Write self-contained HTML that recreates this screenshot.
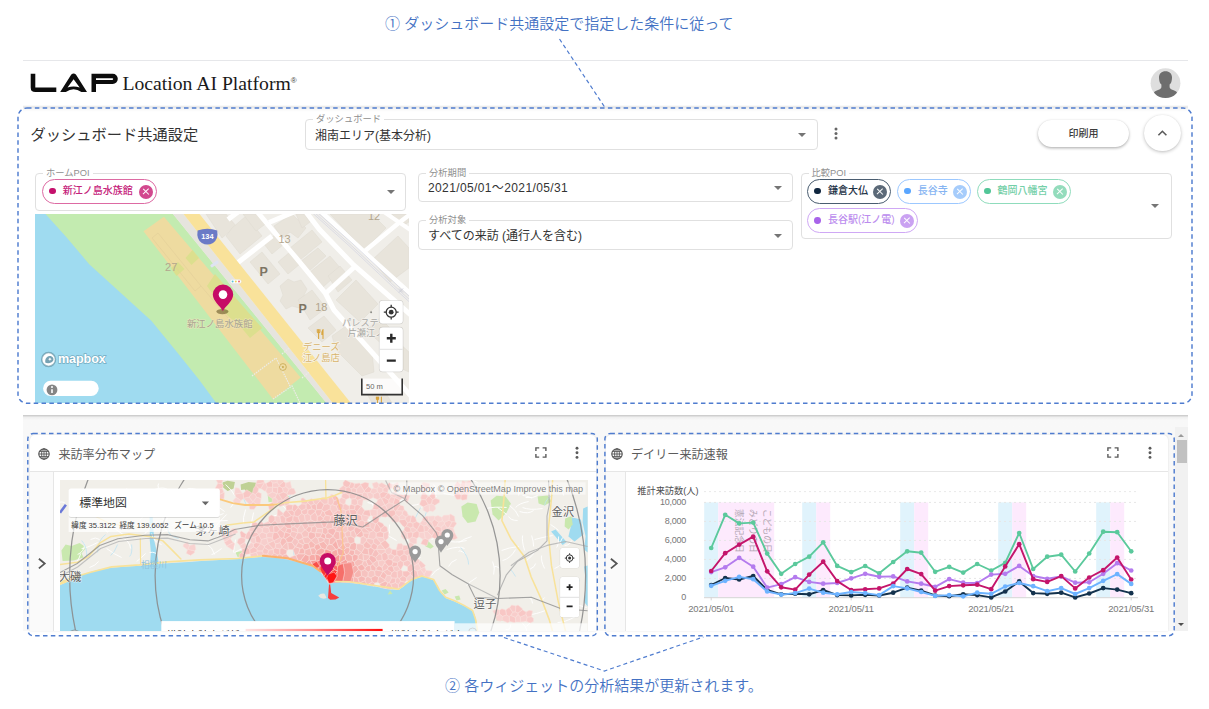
<!DOCTYPE html>
<html lang="ja">
<head>
<meta charset="utf-8">
<title>Location AI Platform</title>
<style>
*{box-sizing:border-box;margin:0;padding:0}
html,body{width:1209px;height:709px;overflow:hidden;background:#fff}
body{font-family:"Liberation Sans","Noto Sans CJK JP",sans-serif;color:#333;position:relative}
.abs{position:absolute}
.note{position:absolute;color:#4371c3;font-size:15px;font-weight:350;line-height:20px;white-space:nowrap}
.dash{position:absolute;border:1.3px dashed #5b83cc;border-radius:11px;pointer-events:none}
.fs{position:absolute;border:1px solid #e0e0e0;border-radius:4px;background:#fff}
.fs .lb{position:absolute;top:-6px;left:7px;background:#fff;padding:0 3px;font-size:9.3px;line-height:10px;color:#8f8f8f;white-space:nowrap}
.fs .val{position:absolute;left:9px;font-size:12px;color:#333;white-space:nowrap}
.arrow{position:absolute;width:0;height:0;border-left:4px solid transparent;border-right:4px solid transparent;border-top:4px solid #757575}
.chip{position:absolute;height:24.6px;border-radius:12.5px;border:1px solid;background:#fff;font-size:10px;font-weight:500;white-space:nowrap;line-height:22.6px;padding-left:20px}
.chip i{position:absolute;left:6.2px;top:7.6px;width:6.8px;height:6.8px;border-radius:50%}
.chip b{position:absolute;right:3.4px;top:4.6px;width:14px;height:14px;border-radius:50%}
.chip b:before,.chip b:after{content:"";position:absolute;left:3.2px;top:6.35px;width:7.6px;height:1.3px;background:#fff;transform:rotate(45deg)}
.chip b:after{transform:rotate(-45deg)}
.card{position:absolute;background:#fff;border-radius:8px;overflow:hidden}
.wt{position:absolute;font-size:12.1px;color:#5c5c5c;white-space:nowrap}
</style>
</head>
<body>
<!-- annotations -->
<div class="note" style="left:385px;top:14px;">① ダッシュボード共通設定で指定した条件に従って</div>
<div class="note" style="left:445px;top:676px;">② 各ウィジェットの分析結果が更新されます。</div>
<!-- header -->
<div class="abs" style="left:23px;top:59.5px;width:1165px;height:1px;background:#e6e7ea"></div>
<div class="abs" style="left:23px;top:105px;width:1165px;height:7px;background:linear-gradient(rgba(0,0,0,0),rgba(0,0,0,.10) 2px,rgba(0,0,0,.03) 4px,rgba(0,0,0,0))"></div>
<svg class="abs" style="left:25px;top:65px" width="100" height="35" viewBox="25 65 100 35">
 <path d="M33 73.7 V87.4 Q33 89.7 35.3 89.7 H56.3" fill="none" stroke="#0c0c0c" stroke-width="4.6"/>
 <path fill="#0c0c0c" fill-rule="evenodd" d="M60.2 92 L71.3 74.6 Q73.6 72.4 75.9 74.6 L87 92 H81.4 Q73.6 86.6 65.8 92 Z M73.6 79.2 L67.5 87.5 Q73.6 85.7 79.7 87.5 Z"/>
 <path fill="#0c0c0c" fill-rule="evenodd" d="M91.5 73.7 H112.7 a5.1 5.1 0 0 1 0 10.2 H96 V92 H91.5 Z M96 78.3 H112.4 a0.8 0.8 0 0 1 0 1.6 H96 Z"/>
</svg>
<div class="abs" style="left:122.4px;top:70px;font-family:'Liberation Serif',serif;font-size:19.7px;color:#1a1a1a;white-space:nowrap;line-height:26px">Location AI Platform<span style="font-family:'Liberation Sans',sans-serif;font-size:8px;position:relative;top:-7px;left:0px;color:#444">®</span></div>
<svg class="abs" style="left:1150px;top:68px" width="31" height="31" viewBox="0 0 31 31">
 <defs><clipPath id="av"><circle cx="15.5" cy="15.2" r="14.9"/></clipPath></defs>
 <circle cx="15.5" cy="15.2" r="14.9" fill="#dedede"/>
 <g clip-path="url(#av)" fill="#6e6e6e"><path d="M15.5 3.2 C19.6 3.2 22.2 5.8 22 10 C21.9 13 21.2 15.2 19.6 16.6 L19.6 19 C19.6 20.6 21 21.3 23 22 C25.5 22.9 27.3 24 28 26 L28 31 L3 31 L3 26 C3.7 24 5.5 22.9 8 22 C10 21.3 11.4 20.6 11.4 19 L11.4 16.6 C9.8 15.2 9.1 13 9 10 C8.8 5.8 11.4 3.2 15.5 3.2Z"/></g>
</svg>

<!-- common settings panel -->
<div class="abs" style="left:30.6px;top:124px;font-size:15.25px;color:#333;line-height:22px;white-space:nowrap">ダッシュボード共通設定</div>
<div class="fs" style="left:305px;top:119.3px;width:512.6px;height:30.8px"><span class="lb">ダッシュボード</span><span class="val" style="top:7px;line-height:18px">湘南エリア(基本分析)</span><span class="arrow" style="right:10.6px;top:13px"></span></div>
<svg class="abs" style="left:834px;top:126.6px" width="4" height="13" viewBox="0 0 4 13"><g fill="#666"><circle cx="2" cy="2" r="1.5"/><circle cx="2" cy="6.5" r="1.5"/><circle cx="2" cy="11.1" r="1.5"/></g></svg>
<div class="abs" style="left:1038px;top:120px;width:91px;height:27px;border-radius:14px;background:#fff;box-shadow:0 1.2px 3px rgba(0,0,0,.3),0 0 1px rgba(0,0,0,.1);font-size:10px;font-weight:500;text-align:center;line-height:28.5px;color:#3c3c3c">印刷用</div>
<div class="abs" style="left:1144px;top:114.5px;width:36.6px;height:36.6px;border-radius:50%;background:#fff;box-shadow:0 1.2px 3.5px rgba(0,0,0,.24),0 0 1px rgba(0,0,0,.1)"><svg class="abs" style="left:0;top:0" width="37" height="37" viewBox="0 0 37 37"><path d="M14.4 20.3 L18.4 16.3 L22.4 20.3" fill="none" stroke="#5a5a5a" stroke-width="1.6"/></svg></div>

<div class="fs" style="left:35px;top:172.7px;width:371px;height:38px"><span class="lb">ホームPOI</span>
 <div class="chip" style="left:5.8px;top:5.3px;width:115.2px;border-color:#dd6aa3;color:#c5227a"><i style="background:#c4106c"></i>新江ノ島水族館<b style="background:#d2488e"></b></div>
 <span class="arrow" style="right:10px;top:16.5px"></span></div>
<div class="fs" style="left:418px;top:173px;width:375.4px;height:29.3px"><span class="lb">分析期間</span><span class="val" style="top:5.4px;line-height:18px;letter-spacing:.38px">2021/05/01～2021/05/31</span><span class="arrow" style="right:10.5px;top:12.4px"></span></div>
<div class="fs" style="left:418px;top:220.4px;width:375.4px;height:29.3px"><span class="lb">分析対象</span><span class="val" style="top:5.2px;line-height:18px">すべての来訪 (通行人を含む)</span><span class="arrow" style="right:10.5px;top:12.4px"></span></div>
<div class="fs" style="left:800.5px;top:172.7px;width:371.5px;height:66px"><span class="lb">比較POI</span>
 <div class="chip" style="left:5.4px;top:5.4px;width:84.6px;border-color:#4a5d70;color:#1f3347"><i style="background:#10263f"></i>鎌倉大仏<b style="background:#5b6978"></b></div>
 <div class="chip" style="left:95.2px;top:5.4px;width:74.6px;border-color:#9cc8ff;color:#86b4f2"><i style="background:#5aa6ff"></i>長谷寺<b style="background:#a6ccfb"></b></div>
 <div class="chip" style="left:175.1px;top:5.4px;width:94.4px;border-color:#8fdcbc;color:#74cfa8"><i style="background:#52c697"></i>鶴岡八幡宮<b style="background:#93dcbc"></b></div>
 <div class="chip" style="left:5.4px;top:34.7px;width:111.5px;border-color:#cfa8f5;color:#bb8cee"><i style="background:#a863ea"></i>長谷駅(江ノ電)<b style="background:#caa2f2"></b></div>
 <span class="arrow" style="right:12px;top:30px"></span></div>

<!-- MAP1 -->
<div id="map1" class="abs" style="left:35px;top:214px;width:374px;height:189px;overflow:hidden;background:#c3ebb0">
<svg class="abs" style="left:0;top:0" width="374" height="189" viewBox="35 214 374 189" font-family="'Liberation Sans','Noto Sans CJK JP',sans-serif">
 <rect x="35" y="214" width="374" height="189" fill="#c3ebb0"/>
 <!-- water -->
 <path d="M35 214 H45.5 L66.7 237.4 L89.2 264.2 L120.3 292.4 L151.3 320.7 L176.7 351.7 L199.3 379.9 L216.2 403 H35Z" fill="#9fdbf0"/>
 <!-- urban land -->
 <path d="M173 214 H409 V403 H326.5 Z" fill="#f0eee9"/>
 <path d="M173 214 L183.5 214 L332.7 403 L326.5 403Z" fill="#e6e4de"/>
 <!-- buildings -->
 <g fill="#e8e4db" stroke="#dfdbd0" stroke-width="0.5">
  <path d="M206 214 L226 214 L236 226 L222 238 Z"/>
  <path d="M232 228 L246 216 L262 236 L240 254 L226 236Z"/>
  <path d="M243 214 L262 214 L268 222 L256 231Z"/>
  <path d="M250 262 L262 252 L280 274 L268 284Z"/>
  <path d="M264 244 L276 234 L284 244 L272 254Z"/>
  <path d="M278 262 L290 252 L300 264 L288 274Z"/>
  <path d="M280 286 l8 -7 l6 3 l7 -2 l6 9 l-3 6 l3 6 l-8 7 l-7 -2 l-6 3 l-6 -8 l3 -6Z"/>
  <path d="M274 226 L292 214 L306 228 L298 238 L290 232 L282 238Z"/>
  <path d="M290 248 L312 230 L322 242 L300 260Z"/>
  <path d="M300 262 L318 248 L326 256 L308 272Z"/>
  <path d="M310 272 L330 256 L342 270 L322 288Z"/>
  <path d="M328 276 L340 266 L352 280 L338 292Z"/>
  <path d="M296 214 L304 214 L310 222 L302 228Z"/>
  <path d="M336 300 L356 280 L378 304 L360 322 Z"/>
  <path d="M330 214 L372 214 L386 228 L364 250 Z"/>
  <path d="M372 260 L398 236 L409 248 L409 268 L390 282Z"/>
  <path d="M392 214 L409 214 L409 222 L402 226Z"/>
  <path d="M298 300 L312 290 L326 308 L310 320Z"/>
  <path d="M308 328 L324 316 L336 330 L322 342Z"/>
  <path d="M332 336 L346 326 L372 352 L374 372 L362 376 L336 350Z"/>
  <path d="M366 330 L380 318 L396 334 L384 346Z"/>
  <path d="M386 352 L398 342 L409 352 L409 372 L400 368Z"/>
  <path d="M366 392 L380 384 L392 403 L372 403Z"/>
 </g>
 <!-- white streets -->
 <g stroke="#fff" stroke-width="5" fill="none" stroke-linecap="butt">
  <path d="M238 262.5 L272 236"/>
  <path d="M257.5 212 L272 229.5 L292.5 253.5 L325.5 293.5 L334 310 L412 397"/>
  <path d="M228 219.5 L238 212"/>
  <path d="M269 222.5 L294 212"/>
  <path d="M306 212 L319.5 229.5 L353.5 265 L412 316"/>
  <path d="M325.5 293.5 L355 266.5"/>
  <path d="M321.5 212 L364 251.7 L412 295" stroke-width="4.5"/>
  <path d="M364 251.7 L398 223.5 L412 213" stroke-width="4.5"/>
  <path d="M384 212 L412 231" stroke-width="4"/>
 </g>
 <!-- railway -->
 <g stroke="#d5d7e2" stroke-width="0.8" fill="none">
  <path d="M312.5 213 L349 245.7 L393.5 287.5 L410 302.5"/>
  <path d="M315 213 L351.5 245.7 L396 287.5 L410 300"/>
  <path d="M318 213 L353 244 L398 286 L410 297"/>
 </g>
 <!-- main road -->
 <path d="M183.5 214 L199.5 214 L350.8 403 L332.7 403Z" fill="#f9e29a"/>
 <!-- aquarium -->
 <path d="M163.9 216.8 L300.7 377.4 L273.2 399.5 L143.5 231.2Z" fill="#eedba0"/>
 <g fill="#dcdf8e">
  <path d="M185.5 258 L192.5 250 L199 258 L191.5 265Z"/>
  <path d="M171 268 L178 262 L184.5 269 L176.5 276Z"/>
  <path d="M207 286 L215 274 L234 296 L262 328 L250 338 L240 326 L228 316Z"/>
 </g>
 <g stroke="#e3cf98" stroke-width="0.6" fill="none">
  <path d="M152 238 L158 233 L201 286 L195 291Z"/>
  <path d="M201 286 L228 318"/>
 </g>
 <g stroke="#ecebe6" stroke-width="1.2" fill="none" stroke-dasharray="1.5 1">
  <path d="M282 354 L289 348"/><path d="M302 378 L309 372"/><path d="M273 399 L292 386 L300 403"/><path d="M252 376 L276 358 L290 386"/>
 </g>
 <!-- bridge icon -->
 <rect x="210" y="262.5" width="9" height="3" rx="1" fill="#dfe3f2" transform="rotate(-35 214.5 264)"/>
 <!-- traffic signal -->
 <rect x="230.3" y="279.6" width="11" height="4" rx="2" fill="#fff" stroke="#ddd" stroke-width="0.4"/>
 <circle cx="232.6" cy="281.6" r="1" fill="#59c3d6"/><circle cx="235.8" cy="281.6" r="1" fill="#f2d259"/><circle cx="239" cy="281.6" r="1" fill="#f06a78"/>
 <!-- 134 shield -->
 <path d="M197.6 230.6 Q207.4 227 217.2 230.6 Q218.6 239.4 213 243 Q207.4 246 201.8 243 Q196.2 239.4 197.6 230.6Z" fill="#6b7ac6"/>
 <text x="207.4" y="239.4" font-size="7.4" font-weight="700" fill="#fff" text-anchor="middle">134</text>
 <!-- labels -->
 <g font-size="11" fill="#b3a68e" text-anchor="middle">
  <text x="171.2" y="270.6">27</text>
  <text x="284.5" y="243">13</text>
  <text x="374" y="219.5">12</text>
  <text x="321.3" y="310.6">18</text>
 </g>
 <g font-size="12.5" font-weight="700" fill="#7d7463" text-anchor="middle">
  <text x="263.7" y="276.4">P</text>
  <text x="302.6" y="313.4">P</text>
 </g>
 <g font-size="9.3" fill="#d8b46c" text-anchor="middle" stroke="#f6f3ea" stroke-width="1.6" paint-order="stroke">
  <text x="321.3" y="350">デニーズ</text>
  <text x="321.3" y="360.6">江ノ島店</text>
 </g>
 <g stroke="#d9a640" stroke-width="1.1" fill="none" stroke-linecap="round">
  <path d="M318.6 329.5 V338.5 M317.3 329.5 V332 Q318.6 334 319.9 332 V329.5"/>
  <path d="M323 329.5 V338.5 M323 329.5 Q321.6 331.5 321.9 334.5 H323"/>
  <path d="M377.5 397 V403 M376.4 397 V399 Q377.5 401 378.6 399 V397"/>
  <path d="M381.4 397 V403"/>
 </g>
 <g font-size="9.2" fill="#a8a8a4" text-anchor="middle" stroke="#f4f2ee" stroke-width="1.4" paint-order="stroke">
  <text x="365" y="325.6">パレステー</text>
  <text x="366" y="336.2">片瀬江ノ</text>
 </g>
 <circle cx="371.1" cy="312.2" r="1" fill="#8c8c86"/>
 <text x="219.7" y="326.8" font-size="9.4" fill="#a9a392" text-anchor="middle" stroke="#efe6bd" stroke-opacity=".7" stroke-width="1.2" paint-order="stroke">新江ノ島水族館</text>
 <circle cx="282.9" cy="367" r="3.4" fill="none" stroke="#c9ac58" stroke-width="0.9"/><circle cx="282.9" cy="367" r="1.1" fill="#c9ac58"/>
 <path d="M399 288.5 l4 4 m0 -4 l-4 4" stroke="#c5c6d0" stroke-width="0.8"/>
 <!-- marker -->
 <ellipse cx="222.4" cy="311.6" rx="6" ry="2.7" fill="#5b4a1e" fill-opacity=".55"/>
 <path d="M222.9 311 C220.5 306.5 212.8 301 212.8 294.6 A10.2 10.2 0 0 1 233.2 294.6 C233.2 301 225.3 306.5 222.9 311Z" fill="#c60b66"/>
 <circle cx="223" cy="294.6" r="4.3" fill="#fff"/>
 <!-- mapbox logo -->
 <g>
  <circle cx="48.6" cy="359.5" r="6.9" fill="#fff" stroke="#4f8498" stroke-opacity=".6" stroke-width="1.5"/>
  <path d="M45.4 362.7 C44.6 359.4 46.4 356.2 49.5 355.9 C52.5 355.7 54.2 358.4 53.1 360.7 C51.9 363.2 47.9 363.6 45.4 362.7Z" fill="#5e92a6" fill-opacity=".85"/>
  <path d="M49.9 357.4 l.6 1.2 l1.2 .6 l-1.2 .6 l-.6 1.2 l-.6 -1.2 l-1.2 -.6 l1.2 -.6Z" fill="#fff"/>
  <text x="58" y="363.2" font-size="12.6" font-weight="700" fill="#fff" stroke="#4f8498" stroke-opacity=".55" stroke-width="1.4" paint-order="stroke" letter-spacing="-0.1">mapbox</text>
 </g>
 <!-- info pill -->
 <rect x="43.1" y="380.8" width="55.6" height="15.1" rx="7.5" fill="#fff"/>
 <circle cx="52" cy="389.9" r="5.4" fill="#858585"/>
 <path d="M52 389.2 V393" stroke="#fff" stroke-width="1.6"/><circle cx="52" cy="387" r="1" fill="#fff"/>
 <!-- controls -->
 <g>
  <rect x="379.6" y="300.7" width="23.1" height="22.8" rx="3" fill="#fff" stroke="#000" stroke-opacity=".12" stroke-width="1.4"/>
  <rect x="379.6" y="300.7" width="23.1" height="22.8" rx="3" fill="#fff"/>
  <circle cx="391.2" cy="312.2" r="5" fill="none" stroke="#333" stroke-width="1.3"/><circle cx="391.2" cy="312.2" r="2.4" fill="#333"/>
  <path d="M391.2 304.8 V307.2 M391.2 317.2 V319.6 M383.8 312.2 H386.2 M396.2 312.2 H398.6" stroke="#333" stroke-width="1.3"/>
  <rect x="379.6" y="327.5" width="23.1" height="44" rx="3" fill="#fff" stroke="#000" stroke-opacity=".12" stroke-width="1.4"/>
  <rect x="379.6" y="327.5" width="23.1" height="44" rx="3" fill="#fff"/>
  <path d="M379.6 349.3 H402.7" stroke="#e2e2e2" stroke-width="1"/>
  <path d="M386.8 338.3 H395.8 M391.3 333.8 V342.8 M386.8 360.6 H395.8" stroke="#2a2a2a" stroke-width="2.4"/>
  <rect x="361.8" y="378.6" width="40.4" height="16" fill="#fff" fill-opacity=".78"/>
  <path d="M361.8 378.6 V394.6 H402.2 V378.6" fill="none" stroke="#333" stroke-width="1.6"/>
  <text x="366" y="389" font-size="7.6" fill="#666">50 m</text>
 </g>
</svg>
</div>


<!-- lower area -->
<div class="abs" style="left:23px;top:415px;width:1165px;height:216px;background:linear-gradient(#c4c4c4,#d8d8d8 1px,#f0f0f0 2.5px,#f8f8f8 5px,#f9f9f9)"></div>
<!-- scrollbar -->
<div class="abs" style="left:1175px;top:427px;width:13px;height:204px;background:#f1f1f1"></div>
<div class="abs" style="left:1176.5px;top:440px;width:10.5px;height:22.5px;background:#c1c1c1"></div>
<div class="abs" style="left:1178px;top:434px;width:0;height:0;border-left:3.5px solid transparent;border-right:3.5px solid transparent;border-bottom:3.5px solid #9a9a9a"></div>
<div class="abs" style="left:1178px;top:622.5px;width:0;height:0;border-left:3.5px solid transparent;border-right:3.5px solid transparent;border-top:3.5px solid #505050"></div>

<!-- widget 1 -->
<div class="abs" style="left:29.5px;top:434.5px;width:566px;height:196.5px;background:#fff;border-radius:5px 5px 0 0;box-shadow:0 0 2px rgba(0,0,0,.12)"></div>
<div class="abs" style="left:29.5px;top:471px;width:566px;height:1px;background:#e6e6e6"></div>
<div class="abs" style="left:29.5px;top:472px;width:24.3px;height:159px;background:#fafafa;border-right:1px solid #e6e6e6"></div>
<svg class="abs" style="left:38.3px;top:447.5px" width="12" height="12" viewBox="0 0 12 12"><circle cx="6" cy="6" r="5.2" fill="none" stroke="#555" stroke-width="1.15"/><ellipse cx="6" cy="6" rx="2.4" ry="5.2" fill="none" stroke="#555" stroke-width="0.9"/><path d="M0.8 6H11.2M1.6 3.4H10.4M1.6 8.6H10.4M6 .8V11.2" stroke="#555" stroke-width="0.9" fill="none"/></svg>
<div class="wt" style="left:58.4px;top:445.7px;line-height:18px">来訪率分布マップ</div>
<svg class="abs" style="left:535px;top:447.4px" width="12" height="11" viewBox="0 0 12 11"><path d="M0.9 4V0.9H4.2M7.6 0.9H10.9V4M10.9 7V10.1H7.6M4.2 10.1H0.9V7" fill="none" stroke="#5a5a5a" stroke-width="1.4"/></svg><svg class="abs" style="left:575.2px;top:445.8px" width="4" height="14" viewBox="0 0 4 14"><g fill="#5a5a5a"><circle cx="2" cy="2.2" r="1.45"/><circle cx="2" cy="6.8" r="1.45"/><circle cx="2" cy="11.4" r="1.45"/></g></svg><svg class="abs" style="left:36.8px;top:558px" width="10" height="12" viewBox="0 0 10 12"><path d="M1.9 0.8L7.7 5.6L1.9 10.4" fill="none" stroke="#555" stroke-width="1.8"/></svg>
<div id="map2" class="abs" style="left:60.4px;top:479.5px;width:527.5px;height:151.5px;overflow:hidden;background:#f0eee8">
<svg class="abs" style="left:0;top:0" width="527.5" height="151.5" viewBox="60.4 479.5 527.5 151.5" font-family="'Liberation Sans','Noto Sans CJK JP',sans-serif">
<rect x="60.4" y="479.5" width="527.5" height="151.5" fill="#f1efe9"/>
<path d="M60.0 585.0 L70.0 580.0 L84.3 573.5 L98.0 569.5 L111.4 567.3 L128.0 566.0 L145.2 565.0 L167.8 562.8 L188.9 561.6 L201.6 560.4 L220.0 559.6 L238.5 558.6 L252.0 557.0 L263.3 556.2 L276.0 556.8 L288.1 558.8 L301.0 561.8 L313.0 566.2 L320.0 571.0 L325.4 577.0 L328.5 583.0 L331.0 582.6 L336.0 581.2 L349.6 582.0 L362.0 583.6 L374.4 585.8 L388.0 588.4 L399.3 589.6 L405.0 585.0 L411.7 579.8 L421.6 576.3 L428.0 577.0 L434.0 580.0 L438.5 586.0 L441.5 592.5 L446.0 597.4 L454.9 601.0 L464.0 605.2 L471.0 608.6 L475.0 614.0 L476.6 620.0 L477.6 626.0 L477.0 632.0 L477.0 640.0 L55.0 640.0 L55.0 585.0Z" fill="#9fdbf0"/>
<g fill="#9fdbf0">
<path d="M150 515 L153 515 L154.6 540 L157.5 552 L159.2 563.5 L150.4 564.8 L151.3 552 L150.2 540Z"/>
<path d="M572.2 516.7 L581.3 519 L584 533.7 L575 541 L568.8 536 L571 527Z"/>
<path d="M551.5 531 L556 529 L567 541.5 L563 544.5Z"/>
<path d="M583.5 508 L588 506 L588 552 L584.5 549 L586 536 L583 522Z"/>
<path d="M584.5 566 L588 565 L588 606 L585 602 L586.5 584Z"/>
</g>
<path d="M318.6 595.2 Q321 592.6 325 593.2 L327 597.6 Q322 599.6 318.6 595.2Z" fill="#e9e7e0"/>
<g fill="#c9e8ae">
<path d="M61.8 550.0 L66.0 544.0 L72.0 545.5 L80.0 542.5 L86.6 547.0 L82.0 553.0 L84.0 557.0 L74.0 560.0 L63.0 560.5Z"/>
<path d="M268.0 494.0 L274.0 493.5 L275.0 501.0 L269.0 501.7Z"/>
<path d="M276.0 494.0 L284.0 492.5 L289.5 496.0 L287.0 500.5 L278.0 500.8Z"/>
<path d="M461.7 506.0 L468.0 502.0 L477.0 503.5 L479.7 512.0 L476.0 521.0 L468.0 522.4 L463.0 516.0Z"/>
<path d="M491.0 500.0 L497.0 495.3 L506.0 496.0 L511.3 503.0 L507.0 512.0 L499.0 520.0 L493.0 514.0Z"/>
<path d="M538.0 496.0 L548.0 495.0 L552.0 501.0 L545.0 505.0 L539.0 503.0Z"/>
<path d="M565.5 518.0 L572.0 515.6 L573.0 524.0 L569.0 529.0 L565.0 526.0Z"/>
<path d="M424.0 541.0 L428.0 540.0 L434.2 546.0 L431.0 548.2 L426.0 546.0Z"/>
<path d="M442.0 590.0 L446.0 588.5 L449.0 592.0 L445.0 594.0Z"/>
<path d="M455.0 596.0 L459.5 595.0 L461.0 599.0 L457.0 600.0Z"/>
<path d="M388.0 594.0 L390.5 590.0 L393.0 593.6Z"/>
<path d="M236.0 552.0 L244.0 550.0 L246.0 555.0 L238.0 556.5Z"/>
</g>
<g fill="#bfd195">
<path d="M222.9 482.0 L228.0 480.3 L235.3 481.5 L234.0 488.0 L228.0 490.4 L223.5 487.0Z"/>
<path d="M241.0 484.0 L249.0 481.4 L257.9 482.5 L256.5 490.0 L250.0 494.9 L245.0 489.0 L241.5 489.5Z"/>
<path d="M303.0 542.5 L308.6 542.3 L308.0 546.8 L303.4 546.6Z"/>
<path d="M272.5 552.0 L284.9 551.9 L284.5 555.3 L272.8 555.2Z"/>
<path d="M346.3 535.0 L352.0 534.4 L353.6 541.0 L349.0 543.4 L346.5 540.0Z"/>
<path d="M404.9 526.0 L409.0 524.2 L412.8 529.0 L410.0 532.1 L405.5 531.0Z"/>
<path d="M389.0 502.0 L392.5 501.0 L393.5 505.0 L390.0 506.0Z"/>
<path d="M497.0 617.0 L504.0 616.5 L504.0 620.0 L497.0 620.0Z"/>
</g>
<path d="M198 515Q194 515 184 515M397 503Q393 511 389 515M414 490Q406 490 402 498M516 549Q511 558 503 560M523 495Q531 496 532 498M390 524Q389 530 390 533M511 624Q511 630 506 629M536 563Q536 566 530 569M211 490Q198 496 192 497M277 503Q286 504 288 513M384 487Q383 495 376 494M224 492Q221 494 222 497M382 503Q390 508 402 505M532 535Q534 541 534 546M355 570Q347 573 341 572M187 524Q180 521 172 525M73 570Q72 572 69 575M418 532Q409 533 407 542M194 547Q191 549 190 555M219 535Q217 539 214 539M224 513Q218 515 216 517M428 496Q434 499 434 503M510 505Q517 510 519 516M180 498Q182 505 179 505M158 521Q154 523 145 528M130 523Q124 525 121 528M282 540Q273 544 273 542M523 623Q529 628 527 638M409 556Q411 556 417 562M370 522Q371 525 364 525M546 610Q535 614 531 614M152 524Q148 532 145 533M383 530Q390 537 397 540M246 509Q243 518 244 523M545 597Q543 601 539 600M88 520Q93 524 98 528M469 481Q470 478 478 482M573 604Q578 604 587 607M369 533Q371 536 379 538M437 536Q441 537 447 537M472 536Q465 538 459 542M303 516Q299 522 302 528M553 535Q542 537 535 539M477 577Q469 582 467 585M65 502Q58 500 59 505M523 507Q530 510 543 508M561 564Q560 566 555 568M437 496Q426 500 422 507M189 507Q197 510 200 515M255 538Q254 542 261 546M572 540Q570 545 565 545M415 555Q419 558 416 567M542 555Q541 560 545 568M227 514Q219 522 215 527M368 519Q371 520 374 523M152 533Q154 542 162 544M493 561Q496 567 494 574M307 514Q315 522 320 522M509 516Q511 520 518 520M512 611Q517 615 526 621M444 493Q452 494 463 497M366 578Q372 578 378 578M563 537Q560 542 561 543M538 495Q534 498 526 497M566 578Q565 580 565 584M405 499Q400 501 397 500M375 561Q370 563 369 570M457 559Q451 561 449 566M519 487Q521 490 519 495M236 539Q234 548 234 552M121 520Q127 523 129 522M159 508Q164 516 164 521M372 502Q374 506 375 509M168 517Q167 522 162 520M559 536Q559 545 557 547M422 524Q416 528 409 528M409 552Q406 557 408 562M81 553Q79 561 75 562M529 501Q519 503 516 507M184 492Q182 502 182 507M426 500Q422 504 412 505M450 530Q444 534 432 539M459 551Q459 549 466 553M146 553Q141 558 137 561M222 548Q214 554 212 554M439 534Q443 536 445 543M63 511Q60 511 56 515M172 506Q169 506 175 512M150 552Q153 551 157 553M431 488Q429 496 434 497M177 495Q178 497 177 501M127 488Q126 491 120 494M551 524Q557 528 559 530M243 494Q238 497 231 507M78 494Q78 497 84 497M534 510Q529 514 520 511M555 486Q563 487 564 495M122 537Q130 540 131 548M279 514Q272 515 268 520M440 568Q436 569 432 575M434 484Q437 487 436 497M519 546Q509 547 502 550M100 539Q96 536 91 539M188 488Q196 487 203 493M342 508Q349 507 349 511M107 548Q115 554 122 557M295 497Q291 497 282 502M345 548Q341 550 339 552M99 561Q96 565 90 567M174 531Q168 528 162 532M176 505Q170 510 159 507M343 541Q336 542 322 544M467 540Q455 543 446 540M159 495Q155 499 151 501M207 543Q213 547 215 554M116 524Q115 529 118 530M575 607Q576 610 579 613M338 559Q340 565 346 572M527 597Q532 596 533 603M465 548Q460 545 447 549M159 483Q157 487 162 491M111 526Q117 529 125 535M85 543Q85 551 78 554M192 501Q185 508 178 510M351 521Q355 526 357 524M537 548Q534 555 526 561M151 507Q146 513 140 520M246 547Q244 547 235 552M383 485Q381 489 379 496M531 619Q533 620 527 626M228 520Q216 520 207 522M210 500Q214 503 225 511M167 492Q169 500 165 505M491 482Q494 486 504 493M315 520Q312 526 314 525M520 488Q512 486 505 489M209 500Q212 505 217 503M102 509Q95 508 81 512M226 484Q233 490 235 495M507 507Q494 506 487 508M168 489Q164 486 155 489M421 557Q418 558 415 561M576 616Q565 622 558 622M203 499Q202 506 203 511M98 542Q86 548 82 548M254 512Q252 522 251 526M435 533Q438 536 443 541M368 502Q374 502 378 508M105 527Q107 533 109 531M496 602Q491 600 483 604M523 535Q522 540 525 550M494 567Q496 564 501 569M498 507Q502 510 507 514M391 576Q396 580 393 582" stroke="#fff" stroke-width="0.9" fill="none"/>
<path d="M106 534Q98 540 98 552M313 531Q306 538 303 546M168 528Q169 536 179 538M336 549Q340 555 344 557M344 515Q339 519 333 526M132 544Q133 553 130 556M511 569Q513 571 516 576M553 495Q546 498 545 505M82 540Q88 546 87 558M272 527Q273 533 279 536M240 494Q245 498 247 505M429 507Q424 516 425 522M294 488Q290 496 286 504M421 507Q415 519 412 525M315 502Q316 508 311 514M118 544Q115 552 111 555M296 540Q292 546 295 557M461 547Q469 556 469 564M580 580Q573 587 576 591M447 523Q446 531 449 537" stroke="#bfe3f3" stroke-width="0.8" fill="none"/>
<g stroke="#fae0dd" stroke-width="0.55" stroke-linejoin="round">
<path fill="#f8cbc9" d="M218.3 482.7 L222.1 483.2 L223.1 479.5 L216.6 479.5ZM278.3 486.9 L272.9 486.7 L272.9 486.7 L272.7 491.5 L277.5 493.2 L277.8 493.1ZM388.6 488.9 L386.8 485.8 L383.3 488.1 L383.2 491.3 L388.1 492.2ZM431.9 503.4 L432.9 498.9 L429.8 495.7 L428.4 495.8 L425.9 499.3 L428.8 504.1 L429.3 504.2ZM440.0 501.8 L439.7 499.2 L435.7 497.8 L432.9 498.9 L431.9 503.4 L435.1 505.0ZM400.9 504.7 L396.6 510.3 L403.3 510.6 L404.6 509.5 L404.1 505.7ZM225.1 541.5 L224.9 542.1 L227.2 545.5 L233.7 542.3 L230.6 538.2 L230.3 538.2ZM516.3 605.4 L512.0 604.5 L509.9 607.3 L513.1 611.8 L515.8 611.3ZM533.0 610.4 L529.6 609.8 L526.4 611.5 L526.3 613.9 L527.6 616.8 L531.7 616.2Z"/>
<path fill="#f8c9c7" d="M256.2 483.6 L264.7 482.3 L264.0 479.5 L257.8 479.5ZM435.7 497.8 L435.5 493.9 L433.1 491.5 L429.8 495.7 L432.9 498.9ZM454.6 494.6 L456.7 498.5 L458.1 498.9 L461.2 498.6 L461.6 494.6 L458.4 490.0ZM461.2 498.6 L462.9 499.7 L467.3 498.9 L467.7 494.1 L464.9 492.3 L461.6 494.6ZM249.9 508.1 L251.0 508.7 L254.5 508.8 L257.8 504.2 L253.5 501.3 L253.4 501.3 L250.2 504.2 L249.7 506.6ZM511.2 614.8 L509.5 615.9 L509.8 620.9 L514.8 622.1 L516.2 621.4 L515.8 616.9Z"/>
<path fill="#f8d1cf" d="M271.1 480.3 L273.0 482.8 L277.6 482.1 L277.6 479.5 L271.4 479.5ZM379.4 483.6 L377.0 481.6 L372.5 482.9 L374.2 487.7 L377.3 488.5 L379.0 485.8ZM395.4 497.6 L395.9 497.4 L397.6 493.4 L396.6 490.5 L395.7 490.3 L390.3 493.7 L391.4 496.1ZM395.9 497.4 L399.9 499.5 L403.2 497.3 L403.9 494.8 L397.6 493.4ZM250.2 504.2 L253.4 501.3 L249.5 496.5 L244.2 497.7 L244.1 497.9ZM405.4 518.8 L406.5 516.5 L402.4 513.7 L399.2 516.3 L400.0 519.4ZM422.9 519.7 L420.3 522.9 L420.4 523.5 L424.2 525.6 L427.1 524.8 L428.2 521.9ZM441.3 526.8 L441.9 531.1 L446.5 531.7 L446.7 531.6 L447.6 527.6 L445.0 523.5ZM424.4 575.6 L426.8 576.7 L429.9 576.3 L432.7 571.5 L432.4 570.5 L426.5 570.0 L424.4 573.6ZM493.1 610.3 L496.3 616.0 L500.0 613.7 L500.0 609.7 L497.2 608.8ZM515.8 616.9 L516.2 621.4 L520.8 621.6 L520.9 621.5 L520.8 616.4 L518.5 613.8ZM526.3 613.9 L520.8 616.4 L520.9 621.5 L526.7 620.8 L526.8 620.7 L527.6 616.8Z"/>
<path fill="#f8cfcd" d="M279.5 485.0 L283.9 481.1 L283.5 479.5 L277.6 479.5 L277.6 482.1ZM261.2 488.1 L265.0 490.5 L266.2 490.6 L267.8 486.5 L266.4 483.0 L264.7 482.3ZM268.2 493.8 L272.7 491.5 L272.9 486.7 L267.8 486.5 L266.2 490.6ZM461.6 494.6 L464.9 492.3 L465.0 487.8 L460.9 486.6 L458.5 487.9 L458.4 490.0ZM272.7 491.5 L268.2 493.8 L268.1 495.0 L272.8 498.2 L275.5 497.0 L277.5 493.2ZM413.4 532.5 L417.5 530.2 L417.4 529.3 L413.5 526.4 L410.7 527.4 L411.2 531.3ZM509.8 620.9 L509.5 615.9 L506.9 614.4 L502.9 615.8 L502.3 619.7 L508.2 622.3Z"/>
<path fill="#f8cac8" d="M216.4 488.9 L222.7 487.9 L223.8 484.8 L222.1 483.2 L218.3 482.7 L215.5 487.9ZM259.2 488.1 L261.2 488.1 L264.7 482.3 L264.7 482.3 L256.2 483.6 L256.0 483.8 L256.2 484.7ZM224.3 491.8 L218.7 494.6 L219.5 498.4 L224.4 498.4 L224.8 492.0ZM255.7 494.1 L256.8 496.6 L261.4 498.2 L261.5 498.1 L261.7 493.0 L258.2 491.5ZM428.1 515.8 L427.8 515.6 L423.4 517.1 L422.9 519.7 L428.2 521.9 L429.6 521.0ZM434.0 526.8 L434.9 527.3 L437.4 525.4 L439.0 521.8 L434.8 518.8 L432.0 521.5ZM446.5 531.7 L441.9 531.1 L440.3 531.6 L439.1 537.2 L440.4 537.9 L444.7 535.8ZM190.9 555.1 L194.8 552.2 L194.8 550.3 L188.4 548.9 L187.9 549.2 L186.7 552.7Z"/>
<path fill="#f8c5c3" d="M266.4 483.0 L267.8 486.5 L272.9 486.7 L272.9 486.7 L273.0 482.8 L271.1 480.3ZM365.4 481.7 L361.0 483.7 L361.0 484.4 L364.6 490.3 L368.8 485.9 L369.3 482.8ZM393.3 484.1 L389.6 482.3 L386.8 484.9 L386.8 485.8 L388.6 488.9 L393.1 487.4ZM383.2 491.3 L379.9 493.1 L380.6 497.5 L381.7 497.9 L384.7 497.1 L388.4 492.6 L388.1 492.2Z"/>
<path fill="#f8cecc" d="M273.0 482.8 L272.9 486.7 L278.3 486.9 L279.5 485.7 L279.5 485.0 L277.6 482.1ZM289.5 488.7 L286.2 486.0 L282.8 487.5 L283.7 491.6 L287.3 493.0ZM244.1 497.9 L244.2 497.7 L243.5 493.1 L242.4 492.5 L235.1 493.6 L236.5 496.8 L241.3 500.1ZM389.2 502.3 L393.5 503.6 L395.4 497.6 L391.4 496.1 L389.0 499.8ZM450.9 513.4 L449.8 514.6 L449.4 519.7 L452.4 521.4 L455.5 521.5 L454.9 516.1ZM427.8 530.9 L432.4 535.6 L435.6 529.6 L434.9 527.3 L434.0 526.8 L429.9 527.6Z"/>
<path fill="#f8c7c5" d="M286.2 486.0 L286.2 482.5 L283.9 481.1 L279.5 485.0 L279.5 485.7 L282.8 487.5ZM400.9 504.7 L399.9 503.5 L393.7 503.8 L393.7 509.4 L395.7 510.8 L396.6 510.3ZM437.4 525.4 L434.9 527.3 L435.6 529.6 L440.3 531.6 L441.9 531.1 L441.3 526.8ZM502.9 615.8 L506.9 614.4 L506.1 609.5 L502.2 608.3 L500.0 609.7 L500.0 613.7ZM506.9 614.4 L509.5 615.9 L511.2 614.8 L513.1 611.8 L509.9 607.3 L508.8 607.5 L506.1 609.5ZM518.5 613.8 L520.8 616.4 L526.3 613.9 L526.4 611.5 L522.8 609.2 L518.3 612.6Z"/>
<path fill="#f8d2d0" d="M292.0 487.6 L290.7 481.0 L286.2 482.5 L286.2 486.0 L289.5 488.7ZM396.6 490.5 L399.4 488.0 L398.6 482.5 L397.8 482.0 L393.3 484.1 L393.1 487.4 L395.7 490.3ZM256.8 496.6 L253.5 501.3 L257.8 504.2 L260.4 504.2 L261.4 498.2ZM419.5 532.0 L419.3 536.3 L423.3 538.8 L425.8 538.2 L424.3 531.5ZM424.3 531.5 L425.8 538.2 L428.8 539.3 L432.5 536.8 L432.4 535.6 L427.8 530.9 L424.6 531.2ZM196.2 548.8 L195.2 543.8 L189.9 545.0 L188.4 548.9 L194.8 550.3ZM424.4 573.6 L426.5 570.0 L425.0 566.6 L421.3 568.1 L420.8 569.0Z"/>
<path fill="#f7c4c2" d="M343.4 482.3 L343.7 485.1 L346.5 486.9 L349.4 486.6 L351.3 482.3 L346.0 479.5 L345.6 479.5ZM268.4 504.3 L269.6 508.9 L271.3 510.4 L274.4 508.5 L275.1 503.3 L272.7 502.0ZM349.7 505.5 L349.5 509.3 L355.0 509.1 L355.5 505.0 L351.6 503.8ZM308.2 513.2 L308.3 509.6 L306.6 507.9 L301.8 510.3 L302.1 513.1 L304.8 514.4ZM296.5 522.9 L300.7 521.9 L298.4 516.2 L294.5 515.1 L293.5 515.6 L293.0 519.9ZM331.1 515.8 L329.8 521.3 L332.7 523.2 L335.6 521.7 L335.4 516.2 L333.3 514.4ZM256.0 527.4 L258.0 526.0 L258.3 522.9 L255.7 521.8 L252.5 522.5 L252.2 526.5ZM373.9 530.1 L370.4 526.9 L364.6 526.8 L364.4 527.1 L370.2 531.8 L373.9 530.1ZM377.2 522.7 L376.1 523.2 L373.9 530.1 L373.9 530.1 L376.7 532.5 L380.7 531.1 L381.2 528.1ZM414.8 577.8 L418.9 576.7 L417.4 570.4 L414.5 568.9 L410.5 572.0 L410.5 573.9ZM403.3 575.1 L399.7 577.9 L401.0 580.7 L405.3 581.7 L407.1 579.7 L407.1 577.3ZM398.9 587.2 L403.3 586.4 L405.0 585.0 L405.7 584.5 L405.3 581.7 L401.0 580.7 L398.8 584.0Z"/>
<path fill="#f7c7c5" d="M349.4 486.6 L351.3 488.3 L354.2 487.3 L355.2 483.3 L352.3 481.9 L351.3 482.3ZM308.4 501.2 L303.4 497.3 L301.3 498.2 L302.0 503.5 L306.5 503.7 L308.1 502.4ZM298.0 528.6 L294.2 525.9 L292.3 526.4 L291.3 528.1 L292.1 530.8 L298.2 532.3 L298.4 532.2ZM381.2 528.1 L380.7 531.1 L384.0 532.4 L388.2 531.0 L387.4 526.5 L384.5 525.2ZM407.2 532.0 L408.4 538.2 L409.5 538.7 L412.5 536.6 L413.4 532.5 L411.2 531.3ZM404.2 550.6 L409.2 548.6 L408.1 545.0 L403.4 544.7 L402.8 549.2Z"/>
<path fill="#f7c8c6" d="M361.0 484.4 L361.0 483.7 L359.8 482.6 L355.2 483.3 L354.2 487.3 L356.9 488.6ZM342.0 497.1 L346.4 499.1 L350.0 497.2 L349.6 494.5 L345.9 492.5 L342.6 493.4ZM362.6 498.2 L362.8 493.0 L357.8 493.1 L355.6 498.1 L357.7 499.9ZM277.1 503.0 L280.0 506.1 L285.5 504.6 L283.6 499.5 L282.8 499.3 L278.7 500.5ZM301.7 523.4 L301.7 522.5 L300.7 521.9 L296.5 522.9 L294.2 525.9 L298.0 528.6ZM365.5 521.4 L362.4 519.3 L357.2 522.1 L356.4 526.5 L362.0 529.0 L364.4 527.1 L364.6 526.8ZM250.4 539.1 L252.6 536.9 L250.5 531.0 L249.5 530.1 L246.6 533.7 L245.3 537.6 L245.9 538.3ZM245.3 537.6 L241.5 536.9 L238.7 538.6 L237.5 542.1 L240.4 544.9 L245.1 542.0 L245.9 538.3ZM275.9 543.6 L280.5 542.3 L282.0 537.8 L280.4 536.9 L274.1 540.3ZM268.5 543.0 L264.7 545.4 L264.8 547.1 L269.0 549.8 L273.6 548.9 L273.8 548.6ZM403.6 561.4 L403.8 564.5 L407.9 566.3 L411.5 563.0 L410.9 561.1 L408.1 559.6Z"/>
<path fill="#f8cdcb" d="M383.3 488.1 L386.8 485.8 L386.8 484.9 L382.2 482.3 L379.4 483.6 L379.0 485.8ZM460.9 486.6 L461.3 483.7 L457.6 481.2 L454.9 484.7 L455.5 486.6 L458.5 487.9ZM222.7 487.9 L216.4 488.9 L217.3 493.4 L218.7 494.6 L224.3 491.8ZM425.0 491.8 L422.8 492.1 L421.0 497.5 L421.9 499.1 L425.9 499.3 L428.4 495.8ZM447.6 527.6 L449.7 526.7 L452.4 521.4 L449.4 519.7 L444.8 521.9 L445.0 523.5ZM515.8 611.3 L513.1 611.8 L511.2 614.8 L515.8 616.9 L518.5 613.8 L518.3 612.6ZM533.8 617.8 L531.7 616.2 L527.6 616.8 L526.8 620.7 L530.6 622.5 L533.8 620.9Z"/>
<path fill="#f8ccca" d="M427.3 488.9 L429.8 488.0 L430.0 483.0 L423.6 481.9 L422.2 482.9 L422.3 483.6ZM403.3 510.6 L402.4 513.7 L406.5 516.5 L408.7 514.8 L407.2 511.0 L404.6 509.5ZM408.0 522.6 L410.5 521.7 L411.9 515.6 L408.7 514.8 L406.5 516.5 L405.4 518.8ZM453.7 527.5 L456.9 523.2 L456.6 522.2 L455.5 521.5 L452.4 521.4 L449.7 526.7ZM424.2 525.6 L424.6 531.2 L427.8 530.9 L429.9 527.6 L427.1 524.8ZM449.8 533.4 L450.6 538.9 L455.0 539.1 L457.9 537.6 L454.9 532.1Z"/>
<path fill="#f8c8c6" d="M465.0 487.8 L466.2 487.4 L466.3 481.6 L462.9 480.4 L461.3 483.7 L460.9 486.6ZM252.8 492.8 L255.7 494.1 L258.2 491.5 L259.2 488.1 L256.2 484.7 L254.0 487.9ZM391.4 496.1 L390.3 493.7 L388.4 492.6 L384.7 497.1 L389.0 499.8ZM428.8 504.1 L425.9 499.3 L421.9 499.1 L419.8 503.8 L423.7 506.6ZM413.5 515.0 L411.9 515.6 L410.5 521.7 L413.4 522.8 L417.0 521.1 L416.0 517.3ZM413.5 526.4 L413.4 522.8 L410.5 521.7 L408.0 522.6 L406.6 525.7 L410.7 527.4ZM420.4 523.5 L417.4 529.3 L417.5 530.2 L419.5 532.0 L424.3 531.5 L424.6 531.2 L424.2 525.6ZM522.8 609.2 L522.6 608.1 L518.4 604.5 L516.3 605.4 L515.8 611.3 L518.3 612.6Z"/>
<path fill="#f8d3d1" d="M466.2 487.4 L469.5 487.7 L472.5 485.5 L472.5 484.4 L470.6 480.0 L466.3 481.6ZM235.9 487.2 L235.7 487.3 L234.9 493.5 L235.1 493.6 L242.4 492.5 L239.3 487.7ZM238.4 531.7 L236.1 528.2 L232.7 528.2 L231.3 529.4 L231.3 530.1 L233.9 534.5Z"/>
<path fill="#f8c6c4" d="M279.2 493.5 L283.7 491.6 L282.8 487.5 L279.5 485.7 L278.3 486.9 L277.8 493.1ZM370.5 491.8 L372.2 488.6 L368.8 485.9 L364.6 490.3 L364.6 491.5 L367.2 492.6ZM243.5 493.1 L244.2 497.7 L249.5 496.5 L252.6 492.8 L247.0 489.3ZM384.7 497.1 L381.7 497.9 L385.2 504.5 L385.9 504.6 L389.2 502.3 L389.0 499.8ZM417.0 521.1 L413.4 522.8 L413.5 526.4 L417.4 529.3 L420.4 523.5 L420.3 522.9ZM412.5 536.6 L417.2 538.0 L419.3 536.3 L419.5 532.0 L417.5 530.2 L413.4 532.5ZM432.5 536.8 L434.7 537.9 L439.1 537.2 L440.3 531.6 L435.6 529.6 L432.4 535.6ZM425.8 538.2 L423.3 538.8 L421.2 543.2 L427.2 545.4 L428.8 540.6 L428.8 539.3Z"/>
<path fill="#f7ccca" d="M293.9 494.1 L296.3 492.4 L294.6 488.3 L292.0 487.6 L289.5 488.7 L287.3 493.0 L287.8 494.4ZM373.6 493.7 L373.5 497.1 L378.1 499.2 L380.6 497.5 L379.9 493.1 L378.0 491.4ZM330.6 504.8 L330.4 508.6 L333.5 513.6 L338.4 509.6 L336.7 505.5 L333.1 504.1ZM388.4 510.5 L388.5 510.5 L385.9 504.6 L385.2 504.5 L380.1 507.0 L379.7 508.0 L382.7 511.1ZM280.6 529.1 L284.5 525.2 L284.5 523.2 L281.1 521.9 L278.1 522.7 L277.4 524.8 L280.2 529.2ZM261.5 539.1 L267.0 537.7 L267.3 537.1 L266.9 533.2 L262.5 531.6 L259.2 534.0 L259.1 534.4ZM274.0 540.2 L272.8 537.4 L267.3 537.1 L267.0 537.7 L268.6 542.9ZM383.8 537.1 L376.6 536.3 L376.4 537.0 L381.4 542.4 L385.2 539.8ZM389.4 546.5 L385.7 549.1 L385.4 551.4 L388.2 554.5 L391.4 553.3 L392.6 548.9ZM256.9 551.7 L250.4 553.3 L250.4 553.3 L251.6 557.0 L252.0 557.0 L258.7 556.5ZM397.4 554.5 L395.2 555.5 L392.4 559.6 L393.4 561.4 L398.0 561.9 L400.9 559.9 L400.1 556.3ZM385.1 579.2 L385.6 580.6 L388.3 582.4 L389.8 582.3 L392.1 577.5 L391.0 575.1 L387.2 574.7Z"/>
<path fill="#f7cbc9" d="M345.9 492.5 L346.5 486.9 L343.7 485.1 L339.5 488.4 L340.4 491.3 L342.6 493.4ZM354.2 487.3 L351.3 488.3 L351.8 491.6 L357.1 492.4 L356.9 488.6ZM273.8 532.2 L270.1 531.4 L266.9 533.2 L267.3 537.1 L272.8 537.4ZM257.0 548.1 L257.6 550.6 L262.9 550.5 L264.8 547.1 L264.7 545.4 L261.1 543.0ZM262.8 555.9 L263.8 553.4 L262.9 550.5 L257.6 550.6 L256.9 551.7 L258.7 556.5 L260.7 556.4ZM391.4 553.3 L388.2 554.5 L388.5 558.5 L392.4 559.6 L395.2 555.5ZM425.0 566.6 L425.8 564.7 L421.1 560.6 L420.2 560.5 L418.8 563.0 L421.3 568.1ZM398.0 565.1 L393.4 566.6 L394.6 570.5 L397.4 571.1 L400.8 569.3Z"/>
<path fill="#f7c6c4" d="M349.4 486.6 L346.5 486.9 L345.9 492.5 L349.6 494.5 L351.8 491.6 L351.3 488.3ZM311.2 505.0 L314.8 503.5 L312.5 498.5 L311.6 498.0 L308.4 501.2 L308.1 502.4ZM306.5 503.7 L302.0 503.5 L298.4 505.9 L298.6 507.0 L301.8 510.3 L306.6 507.9ZM380.1 507.0 L377.1 502.1 L374.6 503.0 L373.0 508.8 L377.4 509.6 L379.7 508.0ZM311.2 519.4 L315.8 521.6 L317.6 520.6 L317.8 515.8 L315.7 511.5 L311.0 515.1ZM268.9 527.2 L270.1 531.4 L273.8 532.2 L274.5 531.9 L274.0 525.9 L271.4 524.0ZM255.4 536.6 L259.1 534.4 L259.2 534.0 L257.4 532.1 L250.5 531.0 L252.6 536.9ZM374.0 538.9 L374.0 542.3 L378.1 545.3 L381.1 543.4 L381.4 542.4 L376.4 537.0ZM250.4 553.3 L256.9 551.7 L257.6 550.6 L257.0 548.1 L254.0 546.4 L250.0 549.0ZM382.1 553.7 L379.5 553.3 L376.0 557.1 L377.2 560.1 L378.5 560.6 L382.8 559.6ZM400.8 569.3 L397.4 571.1 L397.8 577.1 L399.7 577.9 L403.3 575.1 L403.0 570.7 L401.2 569.3Z"/>
<path fill="#f7cfcd" d="M364.6 491.5 L364.6 490.3 L361.0 484.4 L356.9 488.6 L357.1 492.4 L357.8 493.1 L362.8 493.0ZM373.5 497.1 L373.6 493.7 L370.5 491.8 L367.2 492.6 L369.6 499.0ZM385.9 504.6 L388.5 510.5 L393.7 509.4 L393.7 503.8 L393.5 503.6 L389.2 502.3ZM257.4 532.1 L256.0 527.4 L252.2 526.5 L249.4 529.1 L249.5 530.1 L250.5 531.0ZM240.4 544.9 L240.8 546.4 L242.6 548.6 L247.7 546.7 L247.7 546.2 L245.1 542.0ZM417.4 570.4 L418.9 576.7 L419.6 577.0 L421.6 576.3 L422.4 576.4 L424.4 575.6 L424.4 573.6 L420.8 569.0Z"/>
<path fill="#f8d0ce" d="M374.2 487.7 L372.2 488.6 L370.5 491.8 L373.6 493.7 L378.0 491.4 L377.3 488.5ZM377.3 488.5 L378.0 491.4 L379.9 493.1 L383.2 491.3 L383.3 488.1 L379.0 485.8ZM252.6 492.8 L249.5 496.5 L253.4 501.3 L253.5 501.3 L256.8 496.6 L255.7 494.1 L252.8 492.8ZM403.2 497.3 L407.5 502.8 L410.3 495.2 L404.8 493.7 L403.9 494.8ZM395.7 510.8 L396.2 513.8 L399.2 516.3 L402.4 513.7 L403.3 510.6 L396.6 510.3ZM428.2 521.9 L427.1 524.8 L429.9 527.6 L434.0 526.8 L432.0 521.5 L429.6 521.0ZM233.1 549.5 L233.5 549.4 L235.2 542.9 L233.7 542.3 L227.2 545.5 L227.3 545.8Z"/>
<path fill="#f8d5d3" d="M420.8 487.9 L422.4 491.8 L422.8 492.1 L425.0 491.8 L427.3 488.9 L422.3 483.6ZM464.9 492.3 L467.7 494.1 L470.3 492.2 L469.5 487.7 L466.2 487.4 L465.0 487.8ZM432.0 521.5 L434.8 518.8 L435.0 516.2 L434.2 515.4 L428.1 515.8 L429.6 521.0ZM434.8 518.8 L439.0 521.8 L442.8 520.4 L442.3 517.0 L438.3 515.0 L435.0 516.2ZM454.9 531.9 L453.7 527.5 L449.7 526.7 L447.6 527.6 L446.7 531.6 L449.8 533.4 L454.9 532.1ZM496.0 616.7 L497.4 619.9 L500.7 620.7 L502.3 619.7 L502.9 615.8 L500.0 613.7 L496.3 616.0Z"/>
<path fill="#f7c9c7" d="M277.5 493.2 L275.5 497.0 L278.7 500.5 L282.8 499.3 L279.2 493.5 L277.8 493.1ZM314.8 503.5 L316.7 504.7 L320.5 500.2 L320.3 499.6 L312.5 498.5ZM321.0 497.8 L320.3 499.6 L320.5 500.2 L324.4 503.9 L328.3 503.4 L328.6 498.2 L323.0 497.0ZM328.3 503.4 L330.6 504.8 L333.1 504.1 L334.5 500.4 L331.3 494.3 L328.6 498.2ZM343.6 504.1 L343.0 508.7 L346.3 510.1 L349.5 509.3 L349.5 509.3 L349.7 505.5 L345.4 503.3ZM361.6 505.8 L357.1 511.4 L357.3 513.3 L361.7 515.2 L362.9 514.1 L365.1 509.9 L361.7 505.8ZM261.7 520.9 L258.3 522.9 L258.0 526.0 L262.8 528.3 L264.3 526.1 L264.0 523.0ZM269.0 549.8 L268.0 553.5 L270.4 556.5 L271.0 556.6 L274.2 552.6 L273.6 548.9ZM404.3 553.4 L407.7 555.4 L411.0 552.7 L410.7 549.6 L409.2 548.6 L404.2 550.6ZM398.8 584.0 L401.0 580.7 L399.7 577.9 L397.8 577.1 L396.1 577.8 L395.8 582.2Z"/>
<path fill="#f7c5c3" d="M282.8 499.3 L283.6 499.5 L287.6 495.5 L287.8 494.4 L287.3 493.0 L283.7 491.6 L279.2 493.5ZM322.8 510.3 L324.7 511.5 L330.4 508.6 L330.6 504.8 L328.3 503.4 L324.4 503.9 L321.9 509.2ZM283.1 514.4 L286.3 517.8 L291.9 515.3 L287.6 509.9 L286.6 509.4 L283.6 512.7ZM275.5 520.0 L275.4 516.2 L271.7 514.5 L269.2 516.3 L268.8 521.0 L271.3 523.5ZM281.1 521.9 L284.5 523.2 L286.2 521.4 L286.3 517.8 L283.1 514.4 L280.0 515.7ZM406.6 525.7 L408.0 522.6 L405.4 518.8 L400.0 519.4 L399.4 520.8 L402.6 525.0 L405.0 526.8ZM410.7 527.4 L406.6 525.7 L405.0 526.8 L404.3 529.8 L407.2 532.0 L411.2 531.3ZM404.3 553.4 L400.1 556.3 L400.9 559.9 L403.6 561.4 L408.1 559.6 L407.7 555.4ZM400.9 559.9 L398.0 561.9 L398.0 565.1 L400.8 569.3 L401.2 569.3 L403.8 564.5 L403.6 561.4ZM389.0 565.9 L385.4 562.0 L382.4 566.7 L383.4 570.9 L383.7 571.0 L387.7 568.8ZM391.0 575.1 L392.1 577.5 L396.1 577.8 L397.8 577.1 L397.4 571.1 L394.6 570.5 L392.3 572.0Z"/>
<path fill="#f7c2c0" d="M331.3 494.3 L334.5 500.4 L339.1 498.5 L336.1 494.9 L331.8 493.9 L331.3 494.2ZM292.4 509.4 L294.8 511.7 L298.6 507.0 L298.4 505.9 L295.6 503.9 L293.4 504.6ZM294.5 515.1 L294.8 511.7 L292.4 509.4 L287.6 509.9 L291.9 515.3 L293.5 515.6ZM349.5 509.3 L346.3 510.1 L345.1 515.2 L349.6 516.9 L351.5 515.3ZM396.2 513.8 L395.7 510.8 L393.7 509.4 L388.5 510.5 L388.4 510.5 L388.0 515.8 L391.5 517.6ZM320.8 515.0 L317.8 515.8 L317.6 520.6 L320.7 520.9 L323.5 519.2 L324.0 517.4ZM280.4 548.5 L275.5 547.3 L273.8 548.6 L273.6 548.9 L274.2 552.6 L278.0 554.5 L280.3 553.7ZM382.1 553.7 L382.8 559.6 L385.3 560.7 L388.5 558.5 L388.2 554.5 L385.4 551.4ZM411.5 563.0 L407.9 566.3 L408.0 570.5 L410.5 572.0 L414.5 568.9 L414.2 565.6ZM410.5 573.9 L410.5 572.0 L408.0 570.5 L403.0 570.7 L403.3 575.1 L407.1 577.3ZM388.3 582.4 L384.9 587.8 L388.0 588.4 L391.9 588.8 L392.9 587.7 L391.3 583.7 L389.8 582.3Z"/>
<path fill="#f7cac8" d="M357.8 493.1 L357.1 492.4 L351.8 491.6 L349.6 494.5 L350.0 497.2 L351.8 498.6 L355.6 498.1ZM357.7 499.9 L355.6 498.1 L351.8 498.6 L351.6 503.8 L355.5 505.0 L358.3 503.9ZM278.0 508.9 L277.4 515.6 L280.0 515.7 L283.1 514.4 L283.6 512.7 L278.7 508.6ZM305.5 520.7 L307.9 521.0 L311.2 519.4 L311.0 515.1 L308.2 513.2 L304.8 514.4ZM290.4 522.3 L292.3 526.4 L294.2 525.9 L296.5 522.9 L293.0 519.9ZM356.4 526.5 L357.2 522.1 L356.0 521.0 L351.5 521.2 L351.7 525.2 L355.8 526.8ZM370.0 522.1 L370.4 526.9 L373.9 530.1 L376.1 523.2 L373.1 521.8ZM370.2 531.8 L369.7 532.5 L368.3 538.0 L374.0 538.9 L376.4 537.0 L376.6 536.3 L376.7 532.5 L373.9 530.1ZM388.6 537.4 L388.9 531.4 L388.2 531.0 L384.0 532.4 L383.8 537.1 L385.2 539.8 L386.0 539.9ZM282.4 547.3 L282.5 546.2 L280.5 542.3 L275.9 543.6 L275.5 547.3 L280.4 548.5Z"/>
<path fill="#f7cecc" d="M363.6 499.3 L369.3 499.8 L369.6 499.0 L367.2 492.6 L364.6 491.5 L362.8 493.0 L362.6 498.2ZM340.3 502.5 L343.6 504.1 L345.4 503.3 L346.4 499.1 L342.0 497.1 L339.7 498.7ZM362.6 504.7 L363.6 499.3 L362.6 498.2 L357.7 499.9 L358.3 503.9 L361.6 505.8 L361.7 505.8ZM264.3 526.1 L262.8 528.3 L262.5 531.6 L266.9 533.2 L270.1 531.4 L268.9 527.2ZM261.1 543.0 L264.7 545.4 L268.5 543.0 L268.6 542.9 L267.0 537.7 L261.5 539.1 L261.0 542.9ZM410.7 549.6 L412.6 548.6 L414.2 543.4 L410.4 541.6 L408.1 545.0 L409.2 548.6Z"/>
<path fill="#f8d6d4" d="M237.7 503.8 L240.1 503.1 L241.3 500.1 L236.5 496.8 L233.1 500.6 L235.8 503.1ZM433.3 511.1 L436.1 508.5 L435.1 505.0 L431.9 503.4 L429.3 504.2 L430.0 510.3ZM442.8 520.4 L444.8 521.9 L449.4 519.7 L449.8 514.6 L444.1 514.8 L442.3 517.0Z"/>
<path fill="#f7d1cf" d="M272.8 498.2 L272.7 502.0 L275.1 503.3 L277.1 503.0 L278.7 500.5 L275.5 497.0ZM382.0 516.3 L382.7 511.1 L379.7 508.0 L377.4 509.6 L377.6 515.5 L379.6 517.3ZM262.5 531.6 L262.8 528.3 L258.0 526.0 L256.0 527.4 L257.4 532.1 L259.2 534.0ZM404.1 538.7 L408.4 538.2 L407.2 532.0 L404.3 529.8 L401.6 531.6 L401.8 536.2ZM417.2 538.0 L412.5 536.6 L409.5 538.7 L410.4 541.6 L414.2 543.4 L417.1 543.1ZM414.8 577.8 L410.5 573.9 L407.1 577.3 L407.1 579.7 L410.3 580.9 L411.7 579.8 L414.3 578.9Z"/>
<path fill="#f7cdcb" d="M283.6 499.5 L285.5 504.6 L286.3 505.3 L289.1 504.2 L290.6 498.6 L287.6 495.5ZM381.7 497.9 L380.6 497.5 L378.1 499.2 L377.1 502.1 L380.1 507.0 L385.2 504.5ZM346.3 510.1 L343.0 508.7 L340.2 510.1 L342.1 516.1 L345.1 515.2ZM369.7 515.8 L362.9 514.1 L361.7 515.2 L362.4 519.3 L365.5 521.4 L367.0 521.0ZM271.3 523.5 L268.8 521.0 L264.0 523.0 L264.3 526.1 L268.9 527.2 L271.4 524.0ZM403.4 544.7 L402.0 543.1 L398.6 543.2 L397.8 543.7 L396.7 549.3 L397.2 549.9 L402.8 549.2ZM408.1 559.6 L410.9 561.1 L414.0 558.3 L413.0 553.9 L411.0 552.7 L407.7 555.4Z"/>
<path fill="#f7c1bf" d="M339.1 498.5 L334.5 500.4 L333.1 504.1 L336.7 505.5 L340.3 502.5 L339.7 498.7ZM321.9 509.2 L324.4 503.9 L320.5 500.2 L316.7 504.7 L316.9 509.3ZM379.0 521.0 L377.2 522.7 L381.2 528.1 L384.5 525.2 L383.4 523.1ZM396.7 549.3 L392.6 548.9 L391.4 553.3 L395.2 555.5 L397.4 554.5 L397.2 549.9Z"/>
<path fill="#f8c4c2" d="M393.7 503.8 L399.9 503.5 L399.9 499.5 L395.9 497.4 L395.4 497.6 L393.5 503.6Z"/>
<path fill="#f7c3c1" d="M286.3 505.3 L286.6 509.4 L287.6 509.9 L292.4 509.4 L293.4 504.6 L289.1 504.2ZM306.5 503.7 L306.6 507.9 L308.3 509.6 L312.5 508.3 L311.2 505.0 L308.1 502.4ZM358.3 503.9 L355.5 505.0 L355.0 509.1 L357.1 511.4 L361.6 505.8ZM301.8 510.3 L298.6 507.0 L294.8 511.7 L294.5 515.1 L298.4 516.2 L302.1 513.1ZM312.5 508.3 L308.3 509.6 L308.2 513.2 L311.0 515.1 L315.7 511.5 L316.1 509.9ZM316.1 509.9 L315.7 511.5 L317.8 515.8 L320.8 515.0 L322.8 510.3 L321.9 509.2 L316.9 509.3ZM335.4 516.2 L341.3 517.4 L342.1 516.1 L340.2 510.1 L338.4 509.6 L333.5 513.6 L333.3 514.4ZM370.2 509.7 L370.0 509.5 L365.1 509.9 L362.9 514.1 L369.7 515.8 L371.1 514.7ZM388.0 515.8 L388.4 510.5 L382.7 511.1 L382.0 516.3 L386.3 516.7ZM335.6 521.7 L339.8 523.0 L341.8 521.0 L341.3 517.4 L335.4 516.2ZM274.0 525.9 L277.4 524.8 L278.1 522.7 L275.5 520.0 L271.3 523.5 L271.4 524.0ZM277.6 532.0 L280.2 529.2 L277.4 524.8 L274.0 525.9 L274.5 531.9ZM246.6 533.7 L241.7 530.4 L240.4 532.0 L241.5 536.9 L245.3 537.6ZM376.6 536.3 L383.8 537.1 L384.0 532.4 L380.7 531.1 L376.7 532.5ZM256.4 542.0 L261.0 542.9 L261.5 539.1 L259.1 534.4 L255.4 536.6ZM254.0 546.4 L257.0 548.1 L261.1 543.0 L261.0 542.9 L256.4 542.0 L253.6 543.2ZM247.7 546.7 L242.6 548.6 L242.3 552.1 L245.9 554.1 L250.4 553.3 L250.4 553.3 L250.0 549.0ZM397.2 549.9 L397.4 554.5 L400.1 556.3 L404.3 553.4 L404.2 550.6 L402.8 549.2ZM245.9 554.1 L242.3 552.1 L239.5 553.9 L240.2 557.9 L240.7 558.3 L245.1 557.8ZM391.3 583.7 L395.8 582.2 L396.1 577.8 L392.1 577.5 L389.8 582.3Z"/>
<path fill="#f7c0be" d="M312.5 508.3 L316.1 509.9 L316.9 509.3 L316.7 504.7 L314.8 503.5 L311.2 505.0ZM336.7 505.5 L338.4 509.6 L340.2 510.1 L343.0 508.7 L343.6 504.1 L340.3 502.5ZM357.1 511.4 L355.0 509.1 L349.5 509.3 L349.5 509.3 L351.5 515.3 L354.0 515.5 L357.3 513.3ZM293.5 515.6 L291.9 515.3 L286.3 517.8 L286.2 521.4 L290.4 522.3 L293.0 519.9ZM379.6 517.3 L377.6 515.5 L372.9 515.6 L373.1 521.8 L376.1 523.2 L377.2 522.7 L379.0 521.0ZM282.0 537.8 L284.1 537.6 L285.2 532.3 L280.6 529.1 L280.2 529.2 L277.6 532.0 L280.4 536.9ZM371.1 547.0 L375.0 549.5 L376.8 549.1 L377.1 548.8 L378.1 545.3 L374.0 542.3 L371.6 544.8ZM268.0 553.5 L263.8 553.4 L262.8 555.9 L263.0 556.2 L263.3 556.2 L270.4 556.5ZM278.0 554.5 L274.2 552.6 L271.0 556.6 L276.0 556.8 L277.4 557.0ZM393.4 561.4 L392.2 565.2 L393.4 566.6 L398.0 565.1 L398.0 561.9Z"/>
<path fill="#f8d4d2" d="M429.3 504.2 L428.8 504.1 L423.7 506.6 L423.7 509.7 L427.8 512.1 L430.0 510.3ZM437.4 525.4 L441.3 526.8 L445.0 523.5 L444.8 521.9 L442.8 520.4 L439.0 521.8ZM227.2 534.0 L223.3 534.1 L222.3 535.3 L225.1 541.5 L230.3 538.2ZM231.3 530.1 L227.2 534.0 L230.3 538.2 L230.6 538.2 L234.0 534.8 L233.9 534.5ZM188.4 548.9 L189.9 545.0 L187.7 541.4 L183.8 543.9 L183.6 546.1 L187.9 549.2Z"/>
<path fill="#f7c4c1" d="M320.8 515.0 L324.0 517.4 L326.0 514.7 L324.7 511.5 L322.8 510.3ZM369.7 532.5 L363.3 532.4 L363.7 535.7 L367.4 538.5 L368.3 538.0ZM383.7 571.0 L387.2 574.7 L391.0 575.1 L392.3 572.0 L387.7 568.8Z"/>
<path fill="#f7bebb" d="M324.7 511.5 L326.0 514.7 L331.1 515.8 L333.3 514.4 L333.5 513.6 L330.4 508.6ZM346.9 524.7 L348.1 525.7 L351.7 525.2 L351.5 521.2 L349.1 519.3 L346.1 522.5ZM383.4 570.9 L383.3 571.0 L380.3 576.0 L385.1 579.2 L387.2 574.7 L383.7 571.0Z"/>
<path fill="#f7d0ce" d="M377.4 509.6 L373.0 508.8 L370.2 509.7 L371.1 514.7 L372.9 515.6 L377.6 515.5ZM275.4 516.2 L275.5 520.0 L278.1 522.7 L281.1 521.9 L280.0 515.7 L277.4 515.6ZM396.9 522.1 L399.4 520.8 L400.0 519.4 L399.2 516.3 L396.2 513.8 L391.5 517.6 L392.6 521.1ZM251.5 541.9 L253.6 543.2 L256.4 542.0 L255.4 536.6 L252.6 536.9 L250.4 539.1ZM247.7 546.7 L250.0 549.0 L254.0 546.4 L253.6 543.2 L251.5 541.9 L247.7 546.2ZM418.8 563.0 L420.2 560.5 L418.6 558.4 L414.0 558.3 L410.9 561.1 L411.5 563.0 L414.2 565.6Z"/>
<path fill="#f7c9c6" d="M302.1 513.1 L298.4 516.2 L300.7 521.9 L301.7 522.5 L305.5 520.7 L304.8 514.4ZM385.7 549.1 L385.5 549.0 L377.1 548.8 L376.8 549.1 L379.5 553.3 L382.1 553.7 L385.4 551.4Z"/>
<path fill="#f7c6c3" d="M326.0 514.7 L324.0 517.4 L323.5 519.2 L328.3 521.9 L329.8 521.3 L331.1 515.8ZM362.0 529.0 L362.1 530.1 L363.3 532.4 L369.7 532.5 L370.2 531.8 L364.4 527.1ZM275.5 547.3 L275.9 543.6 L274.1 540.3 L274.0 540.2 L268.6 542.9 L268.5 543.0 L273.8 548.6ZM264.8 547.1 L262.9 550.5 L263.8 553.4 L268.0 553.5 L269.0 549.8Z"/>
<path fill="#f7bebc" d="M349.1 519.3 L349.6 516.9 L345.1 515.2 L342.1 516.1 L341.3 517.4 L341.8 521.0 L346.1 522.5ZM280.4 536.9 L277.6 532.0 L274.5 531.9 L273.8 532.2 L272.8 537.4 L274.0 540.2 L274.1 540.3ZM388.5 558.5 L385.3 560.7 L385.4 562.0 L389.0 565.9 L392.2 565.2 L393.4 561.4 L392.4 559.6ZM392.3 572.0 L394.6 570.5 L393.4 566.6 L392.2 565.2 L389.0 565.9 L387.7 568.8Z"/>
<path fill="#f7cac7" d="M349.6 516.9 L349.1 519.3 L351.5 521.2 L356.0 521.0 L354.0 515.5 L351.5 515.3Z"/>
<path fill="#f7c0bd" d="M357.3 513.3 L354.0 515.5 L356.0 521.0 L357.2 522.1 L362.4 519.3 L361.7 515.2ZM365.5 521.4 L364.6 526.8 L370.4 526.9 L370.0 522.1 L367.0 521.0Z"/>
<path fill="#f7bdbb" d="M286.2 521.4 L284.5 523.2 L284.5 525.2 L287.5 527.9 L291.3 528.1 L292.3 526.4 L290.4 522.3Z"/>
<path fill="#f6c5c3" d="M307.9 521.0 L305.5 520.7 L301.7 522.5 L301.7 523.4 L305.2 529.4 L305.9 529.5 L309.0 526.1ZM290.7 533.2 L290.7 535.1 L294.6 537.9 L295.5 537.6 L298.2 532.3 L292.1 530.8Z"/>
<path fill="#f6cbc8" d="M312.2 526.7 L315.4 525.2 L315.8 521.6 L311.2 519.4 L307.9 521.0 L309.0 526.1ZM301.6 532.8 L305.2 529.4 L301.7 523.4 L298.0 528.6 L298.4 532.2Z"/>
<path fill="#f6c7c5" d="M323.9 527.3 L320.7 520.9 L317.6 520.6 L315.8 521.6 L315.4 525.2 L317.3 528.2 L323.1 528.0Z"/>
<path fill="#f6bfbd" d="M325.9 527.0 L328.3 521.9 L323.5 519.2 L320.7 520.9 L323.9 527.3Z"/>
<path fill="#f6c5c2" d="M328.3 528.9 L333.4 527.5 L332.7 523.2 L329.8 521.3 L328.3 521.9 L325.9 527.0ZM305.9 529.5 L305.2 529.4 L301.6 532.8 L303.5 536.9 L308.6 536.5 L309.2 532.1ZM348.5 530.1 L345.1 532.4 L345.7 535.9 L347.5 536.6 L351.3 535.8 L351.2 531.1ZM345.7 535.9 L342.0 539.0 L343.5 542.8 L343.9 542.9 L348.9 542.1 L347.5 536.6ZM282.4 547.3 L287.4 549.9 L288.8 549.0 L288.3 542.0 L287.3 541.3 L282.5 546.2Z"/>
<path fill="#f6c3c1" d="M332.7 523.2 L333.4 527.5 L335.8 529.2 L339.6 524.4 L339.8 523.0 L335.6 521.7ZM298.2 532.3 L295.5 537.6 L298.6 539.9 L303.1 537.9 L303.5 536.9 L301.6 532.8 L298.4 532.2Z"/>
<path fill="#f6bebc" d="M341.8 521.0 L339.8 523.0 L339.6 524.4 L343.0 528.1 L346.9 524.7 L346.1 522.5ZM368.3 548.1 L369.4 554.6 L370.2 555.4 L372.1 555.0 L375.0 549.5 L371.1 547.0Z"/>
<path fill="#f7c5c2" d="M285.2 532.3 L286.0 531.8 L287.5 527.9 L284.5 525.2 L280.6 529.1Z"/>
<path fill="#f7bfbd" d="M291.3 528.1 L287.5 527.9 L286.0 531.8 L290.7 533.2 L292.1 530.8Z"/>
<path fill="#f6c0bd" d="M305.9 529.5 L309.2 532.1 L311.2 531.5 L312.2 526.7 L309.0 526.1Z"/>
<path fill="#f6c3c0" d="M317.3 528.2 L315.4 525.2 L312.2 526.7 L311.2 531.5 L315.7 532.8 L316.3 532.1ZM343.0 528.1 L339.6 524.4 L335.8 529.2 L336.3 530.6 L339.9 531.6 L342.8 531.0ZM298.6 539.9 L298.7 542.0 L303.7 544.4 L304.9 543.1 L303.1 537.9ZM318.2 537.5 L316.0 536.3 L311.4 539.6 L311.4 540.1 L315.8 544.1 L319.5 543.3 L319.8 542.5Z"/>
<path fill="#f6c8c5" d="M323.1 528.0 L317.3 528.2 L316.3 532.1 L322.5 532.8 L322.8 532.6Z"/>
<path fill="#f6bebb" d="M325.9 534.3 L328.5 532.2 L328.3 528.9 L325.9 527.0 L323.9 527.3 L323.1 528.0 L322.8 532.6ZM282.9 555.1 L286.6 553.5 L287.4 549.9 L282.4 547.3 L280.4 548.5 L280.3 553.7ZM361.9 552.2 L363.3 553.6 L369.4 554.6 L368.3 548.1 L364.7 547.0 L361.9 552.0ZM298.6 559.8 L296.3 555.0 L295.6 554.7 L289.9 557.0 L289.4 559.1 L295.8 560.6ZM375.1 570.6 L376.4 569.5 L376.6 567.3 L373.1 563.5 L370.8 565.3 L371.3 569.8Z"/>
<path fill="#f6b9b7" d="M333.6 535.5 L336.3 530.6 L335.8 529.2 L333.4 527.5 L328.3 528.9 L328.5 532.2Z"/>
<path fill="#f6cac7" d="M345.1 532.4 L348.5 530.1 L348.1 525.7 L346.9 524.7 L343.0 528.1 L342.8 531.0Z"/>
<path fill="#f6c0be" d="M355.8 526.8 L351.7 525.2 L348.1 525.7 L348.5 530.1 L351.2 531.1 L354.3 529.6ZM376.0 557.1 L379.5 553.3 L376.8 549.1 L375.0 549.5 L372.1 555.0Z"/>
<path fill="#f6bdbb" d="M356.7 535.1 L362.1 530.1 L362.0 529.0 L356.4 526.5 L355.8 526.8 L354.3 529.6ZM368.4 564.8 L370.8 565.3 L373.1 563.5 L373.3 563.1 L369.2 558.1 L366.1 560.3Z"/>
<path fill="#f7bcb9" d="M285.7 538.4 L290.7 535.1 L290.7 533.2 L286.0 531.8 L285.2 532.3 L284.1 537.6ZM388.3 582.4 L385.6 580.6 L380.2 583.3 L381.1 587.1 L384.9 587.8Z"/>
<path fill="#f6bbb9" d="M308.6 536.5 L311.4 539.6 L316.0 536.3 L315.7 532.8 L311.2 531.5 L309.2 532.1ZM370.2 555.4 L369.2 558.1 L373.3 563.1 L377.2 560.1 L376.0 557.1 L372.1 555.0Z"/>
<path fill="#f6c1be" d="M316.3 532.1 L315.7 532.8 L316.0 536.3 L318.2 537.5 L320.7 536.6 L322.5 532.8ZM339.9 531.6 L340.3 538.6 L342.0 539.0 L345.7 535.9 L345.1 532.4 L342.8 531.0ZM320.7 536.6 L318.2 537.5 L319.8 542.5 L324.2 540.9 L324.9 538.3ZM293.4 549.2 L295.5 546.3 L292.2 541.7 L288.3 542.0 L288.8 549.0ZM303.0 547.5 L303.7 544.4 L298.7 542.0 L295.7 546.2 L300.7 548.0ZM295.6 554.7 L296.3 555.0 L298.9 553.2 L300.7 548.0 L295.7 546.2 L295.5 546.3 L293.4 549.2ZM372.7 581.3 L371.3 577.3 L368.2 575.9 L365.9 577.0 L365.3 580.3 L367.5 584.6 L367.7 584.6ZM374.9 582.6 L372.7 581.3 L367.7 584.6 L374.3 585.8Z"/>
<path fill="#f6bab7" d="M322.5 532.8 L320.7 536.6 L324.9 538.3 L326.0 537.5 L325.9 534.3 L322.8 532.6ZM340.3 538.6 L336.6 539.2 L336.5 539.8 L339.1 547.7 L339.4 547.7 L343.5 542.8 L342.0 539.0ZM309.1 542.8 L304.9 543.1 L303.7 544.4 L303.0 547.5 L305.1 549.8 L310.3 547.7Z"/>
<path fill="#f6bdba" d="M326.0 537.5 L330.0 538.5 L333.6 536.2 L333.6 535.5 L328.5 532.2 L325.9 534.3ZM336.3 530.6 L333.6 535.5 L333.6 536.2 L336.6 539.2 L340.3 538.6 L339.9 531.6ZM351.2 543.4 L348.9 542.1 L343.9 542.9 L346.6 547.3 L349.8 547.2ZM282.9 555.1 L280.3 553.7 L278.0 554.5 L277.4 557.0 L282.8 557.9ZM371.3 569.8 L370.8 565.3 L368.4 564.8 L365.4 567.2 L365.1 569.0 L368.6 571.8ZM383.3 571.0 L383.4 570.9 L382.4 566.7 L379.3 565.0 L376.6 567.3 L376.4 569.5Z"/>
<path fill="#f6c6c3" d="M351.2 531.1 L351.3 535.8 L354.8 537.7 L356.6 535.8 L356.7 535.1 L354.3 529.6ZM356.6 548.5 L361.9 552.0 L364.7 547.0 L363.5 544.1 L360.6 543.2 L357.0 543.5ZM366.1 560.3 L369.2 558.1 L370.2 555.4 L369.4 554.6 L363.3 553.6 L363.8 560.3ZM371.3 577.3 L375.6 575.0 L375.1 570.6 L371.3 569.8 L368.6 571.8 L368.2 575.9Z"/>
<path fill="#f6bcb9" d="M361.2 536.9 L363.7 535.7 L363.3 532.4 L362.1 530.1 L356.7 535.1 L356.6 535.8ZM288.3 542.0 L292.2 541.7 L294.6 537.9 L290.7 535.1 L285.7 538.4 L287.3 541.3ZM372.7 581.3 L374.9 582.6 L378.2 581.8 L379.0 576.6 L375.6 575.0 L371.3 577.3Z"/>
<path fill="#f7bdba" d="M282.5 546.2 L287.3 541.3 L285.7 538.4 L284.1 537.6 L282.0 537.8 L280.5 542.3Z"/>
<path fill="#f6c4c2" d="M295.5 546.3 L295.7 546.2 L298.7 542.0 L298.6 539.9 L295.5 537.6 L294.6 537.9 L292.2 541.7Z"/>
<path fill="#f6c4c1" d="M311.4 539.6 L308.6 536.5 L303.5 536.9 L303.1 537.9 L304.9 543.1 L309.1 542.8 L311.4 540.1ZM365.4 567.2 L368.4 564.8 L366.1 560.3 L363.8 560.3 L363.8 560.3 L362.4 563.6ZM378.2 581.8 L380.2 583.3 L385.6 580.6 L385.1 579.2 L380.3 576.0 L379.0 576.6Z"/>
<path fill="#f6bfbc" d="M324.2 540.9 L327.8 545.2 L329.5 543.9 L330.0 538.5 L326.0 537.5 L324.9 538.3ZM347.5 536.6 L348.9 542.1 L351.2 543.4 L354.9 542.0 L354.8 537.7 L351.3 535.8ZM368.3 548.1 L371.1 547.0 L371.6 544.8 L366.7 540.4 L363.5 544.1 L364.7 547.0Z"/>
<path fill="#f6bbb8" d="M336.6 539.2 L333.6 536.2 L330.0 538.5 L329.5 543.9 L332.5 544.2 L336.5 539.8ZM289.9 557.0 L286.6 553.5 L282.9 555.1 L282.8 557.9 L288.1 558.8 L289.4 559.1Z"/>
<path fill="#f6c9c7" d="M360.6 543.2 L363.5 544.1 L366.7 540.4 L367.4 538.5 L363.7 535.7 L361.2 536.9Z"/>
<path fill="#f6c6c4" d="M368.3 538.0 L367.4 538.5 L366.7 540.4 L371.6 544.8 L374.0 542.3 L374.0 538.9Z"/>
<path fill="#f6b9b5" d="M311.4 540.1 L309.1 542.8 L310.3 547.7 L310.5 547.8 L314.7 547.1 L315.8 544.1ZM316.9 550.3 L314.7 547.1 L310.5 547.8 L312.1 554.1 L315.4 554.1 L316.1 553.7ZM358.2 577.2 L354.7 576.2 L353.8 576.8 L353.5 582.5 L358.7 583.2 L359.9 582.7 L359.9 582.6Z"/>
<path fill="#f6b4b0" d="M319.5 543.3 L315.8 544.1 L314.7 547.1 L316.9 550.3 L321.7 547.6Z"/>
<path fill="#f6b7b3" d="M326.3 548.6 L327.8 545.2 L324.2 540.9 L319.8 542.5 L319.5 543.3 L321.7 547.6 L325.5 549.2ZM346.6 547.3 L343.9 549.8 L346.0 554.4 L348.9 553.3 L350.6 549.4 L349.8 547.2Z"/>
<path fill="#f6bcb8" d="M332.3 551.0 L336.5 548.9 L332.5 544.2 L329.5 543.9 L327.8 545.2 L326.3 548.6Z"/>
<path fill="#f6b0ad" d="M332.5 544.2 L336.5 548.9 L337.4 549.0 L339.1 547.7 L336.5 539.8Z"/>
<path fill="#f6b7b4" d="M343.5 542.8 L339.4 547.7 L343.9 549.8 L346.6 547.3 L343.9 542.9ZM301.2 559.9 L305.7 554.0 L305.3 553.3 L298.9 553.2 L296.3 555.0 L298.6 559.8 L298.9 560.0Z"/>
<path fill="#f6b9b6" d="M354.9 542.0 L351.2 543.4 L349.8 547.2 L350.6 549.4 L355.0 550.0 L356.6 548.5 L357.0 543.5ZM361.9 575.3 L358.2 577.2 L359.9 582.6 L365.3 580.3 L365.9 577.0Z"/>
<path fill="#f7cbc8" d="M385.5 549.0 L381.1 543.4 L378.1 545.3 L377.1 548.8ZM378.5 560.6 L379.3 565.0 L382.4 566.7 L385.4 562.0 L385.3 560.7 L382.8 559.6Z"/>
<path fill="#f7c2bf" d="M385.2 539.8 L381.4 542.4 L381.1 543.4 L385.5 549.0 L385.7 549.1 L389.4 546.5 L389.8 544.3 L386.0 539.9Z"/>
<path fill="#f6b8b4" d="M305.1 549.8 L303.0 547.5 L300.7 548.0 L298.9 553.2 L305.3 553.3Z"/>
<path fill="#f6bdb9" d="M305.7 554.0 L309.6 555.6 L312.1 554.1 L310.5 547.8 L310.3 547.7 L305.1 549.8 L305.3 553.3Z"/>
<path fill="#f6b1ad" d="M320.3 554.9 L324.9 551.8 L325.5 549.2 L321.7 547.6 L316.9 550.3 L316.1 553.7ZM355.6 564.6 L353.0 566.8 L352.1 570.0 L354.8 573.4 L359.0 569.1 L357.9 566.0Z"/>
<path fill="#f79f9b" d="M324.9 551.8 L327.6 557.3 L332.0 555.4 L332.3 551.0 L326.3 548.6 L325.5 549.2Z"/>
<path fill="#f7aba7" d="M337.4 549.0 L336.5 548.9 L332.3 551.0 L332.0 555.4 L334.9 557.3 L338.6 554.3ZM353.8 576.8 L354.7 576.2 L354.8 573.4 L352.1 570.0 L346.7 571.5 L346.6 571.8 L348.3 576.5Z"/>
<path fill="#f6aba7" d="M345.5 555.1 L346.0 554.4 L343.9 549.8 L339.4 547.7 L339.1 547.7 L337.4 549.0 L338.6 554.3 L340.4 555.3Z"/>
<path fill="#f6b6b3" d="M350.6 549.4 L348.9 553.3 L352.6 555.4 L355.1 553.7 L355.0 550.0Z"/>
<path fill="#f6c2bf" d="M355.0 550.0 L355.1 553.7 L358.7 555.0 L361.9 552.2 L361.9 552.0 L356.6 548.5ZM368.6 571.8 L365.1 569.0 L361.3 570.5 L361.9 575.3 L365.9 577.0 L368.2 575.9Z"/>
<path fill="#f6ada9" d="M306.1 562.9 L309.6 559.5 L309.6 555.6 L305.7 554.0 L301.2 559.9Z"/>
<path fill="#f7aca8" d="M312.1 554.1 L309.6 555.6 L309.6 559.5 L310.8 560.2 L316.1 559.8 L315.4 554.1Z"/>
<path fill="#f7a39f" d="M315.4 554.1 L316.1 559.8 L316.9 560.9 L321.7 559.4 L320.3 554.9 L316.1 553.7Z"/>
<path fill="#f79c98" d="M327.6 557.5 L327.6 557.3 L324.9 551.8 L320.3 554.9 L321.7 559.4 L322.6 559.9Z"/>
<path fill="#f8918d" d="M332.0 555.4 L327.6 557.3 L327.6 557.5 L330.2 563.0 L335.2 559.8 L334.9 557.3Z"/>
<path fill="#f79a96" d="M338.6 554.3 L334.9 557.3 L335.2 559.8 L337.6 561.5 L339.8 561.4 L340.4 555.3Z"/>
<path fill="#f7aaa6" d="M339.8 561.4 L341.0 562.0 L346.1 559.1 L345.5 555.1 L340.4 555.3Z"/>
<path fill="#f6b3af" d="M353.3 560.6 L352.6 555.4 L348.9 553.3 L346.0 554.4 L345.5 555.1 L346.1 559.1 L348.1 561.0Z"/>
<path fill="#f6b3b0" d="M358.5 558.5 L358.7 555.0 L355.1 553.7 L352.6 555.4 L353.3 560.6 L354.7 561.5Z"/>
<path fill="#f6c3bf" d="M363.8 560.3 L363.3 553.6 L361.9 552.2 L358.7 555.0 L358.5 558.5 L363.8 560.3Z"/>
<path fill="#f7a5a1" d="M313.0 564.2 L310.8 560.2 L309.6 559.5 L306.1 562.9 L306.2 563.7 L311.2 565.5Z"/>
<path fill="#f79894" d="M315.2 564.4 L316.6 563.7 L316.9 560.9 L316.1 559.8 L310.8 560.2 L313.0 564.2Z"/>
<path fill="#f9827d" d="M321.7 559.4 L316.9 560.9 L316.6 563.7 L319.5 565.9 L323.3 564.1 L322.6 559.9Z"/>
<path fill="#f97874" d="M330.2 563.0 L327.6 557.5 L322.6 559.9 L323.3 564.1 L327.1 566.3 L329.9 564.1Z"/>
<path fill="#f97b76" d="M337.6 561.5 L335.2 559.8 L330.2 563.0 L329.9 564.1 L333.4 566.1 L336.6 564.3Z"/>
<path fill="#f9827e" d="M342.4 566.5 L341.0 562.0 L339.8 561.4 L337.6 561.5 L336.6 564.3 L339.3 568.5Z"/>
<path fill="#f7a09c" d="M345.4 567.4 L347.1 565.7 L348.1 561.0 L346.1 559.1 L341.0 562.0 L342.4 566.5ZM353.0 566.8 L347.1 565.7 L345.4 567.4 L346.7 571.5 L352.1 570.0Z"/>
<path fill="#f6a8a4" d="M353.3 560.6 L348.1 561.0 L347.1 565.7 L353.0 566.8 L355.6 564.6 L354.7 561.5Z"/>
<path fill="#f6beba" d="M362.4 563.6 L363.8 560.3 L358.5 558.5 L354.7 561.5 L355.6 564.6 L357.9 566.0Z"/>
<path fill="#f6c7c4" d="M376.6 567.3 L379.3 565.0 L378.5 560.6 L377.2 560.1 L373.3 563.1 L373.1 563.5Z"/>
<path fill="#f97f7a" d="M319.5 565.9 L316.6 563.7 L315.2 564.4 L314.7 567.3 L319.1 570.4Z"/>
<path fill="#fb5651" d="M324.0 571.8 L326.8 570.5 L327.1 566.3 L323.3 564.1 L319.5 565.9 L319.1 570.4 L319.6 570.7Z"/>
<path fill="#fc403c" d="M333.4 566.1 L329.9 564.1 L327.1 566.3 L326.8 570.5 L329.6 572.6 L334.7 569.3Z"/>
<path fill="#fa6964" d="M336.6 564.3 L333.4 566.1 L334.7 569.3 L338.0 570.4 L339.3 568.5Z"/>
<path fill="#f98984" d="M338.0 570.4 L338.0 570.6 L340.9 573.7 L346.6 571.8 L346.7 571.5 L345.4 567.4 L342.4 566.5 L339.3 568.5Z"/>
<path fill="#f6b5b2" d="M365.4 567.2 L362.4 563.6 L357.9 566.0 L359.0 569.1 L361.3 570.5 L365.1 569.0Z"/>
<path fill="#f7d2d0" d="M421.3 568.1 L418.8 563.0 L414.2 565.6 L414.5 568.9 L417.4 570.4 L420.8 569.0Z"/>
<path fill="#ff201f" d="M327.5 580.0 L327.7 580.0 L330.9 575.8 L329.6 572.6 L326.8 570.5 L324.0 571.8 L323.4 574.8 L325.4 577.0 L326.2 578.5Z"/>
<path fill="#fd3c38" d="M334.7 569.3 L329.6 572.6 L330.9 575.8 L333.8 576.5 L334.1 576.3 L338.0 570.6 L338.0 570.4Z"/>
<path fill="#fb4e4a" d="M340.6 576.4 L340.9 573.7 L338.0 570.6 L334.1 576.3Z"/>
<path fill="#f98d89" d="M341.5 578.6 L347.1 578.2 L348.3 576.5 L346.6 571.8 L340.9 573.7 L340.6 576.4Z"/>
<path fill="#f6b5b1" d="M361.3 570.5 L359.0 569.1 L354.8 573.4 L354.7 576.2 L358.2 577.2 L361.9 575.3Z"/>
<path fill="#f6c2c0" d="M375.6 575.0 L379.0 576.6 L380.3 576.0 L383.3 571.0 L376.4 569.5 L375.1 570.6Z"/>
<path fill="#fd2f2b" d="M330.9 575.8 L327.7 580.0 L329.3 582.9 L331.0 582.6 L335.9 581.2 L333.8 576.5Z"/>
<path fill="#fb4d48" d="M335.9 581.2 L336.0 581.2 L339.0 581.4 L340.5 580.4 L341.5 578.6 L340.6 576.4 L334.1 576.3 L333.8 576.5Z"/>
<path fill="#f8928e" d="M341.6 581.5 L347.5 581.9 L347.1 578.2 L341.5 578.6 L340.5 580.4Z"/>
<path fill="#f7a29e" d="M347.5 581.9 L349.6 582.0 L353.5 582.5 L353.8 576.8 L348.3 576.5 L347.1 578.2Z"/>
<path fill="#f6bab6" d="M365.3 580.3 L359.9 582.6 L359.9 582.7 L360.3 583.4 L362.0 583.6 L367.5 584.6Z"/>
<path fill="#f7c7c4" d="M392.9 587.7 L396.4 588.4 L398.7 587.5 L398.9 587.2 L398.8 584.0 L395.8 582.2 L391.3 583.7Z"/>
</g>
<g stroke="#fbd5d2" stroke-width="0.5">
<path fill="#f58d88" d="M343.5 563 L352 562 L354 572 L351 581.6 L343 581.4 L345 572Z"/>
<path fill="#f66f6a" d="M337.5 575.5 L338 565 L343.5 563 L345 572 L343 581.4 L334 582.2Z"/>
<path fill="#f8504a" d="M312.5 563.6 L317 560.8 L320.5 566 L316.4 568.2Z"/>
<path fill="#fb3a34" d="M320.5 566 L324 564.5 L327 572 L324.6 575.6 L320.6 570.6Z"/>
<path fill="#ff1414" d="M328.6 573.6 L334.5 571.5 L337.5 575.5 L333.6 582.2 L329.6 583 L327 577.6Z"/>
</g>
<path d="M329.4 584 L330.6 584 L331.6 592.5 L339.6 597 L336 599 L330.6 599.2 L328.4 597.4Z" fill="#f63c3c"/>
<g fill="none" stroke-linecap="round" stroke-linejoin="round">
<path d="M60 583 L70 579 L78 575.6" stroke="#f8e29a" stroke-width="3.2"/>
<path d="M60 582.5 L75 576.5 L90 572 L112 566.4 L140 564.4 L168 561.4 L200 559.4 L238 558 L263.3 555.3" stroke="#f8e29a" stroke-width="1.7"/>
<path d="M263.3 555.3 L288 557.8 L313 565.2 L321 571" stroke="#fbb26c" stroke-width="2"/>
<path d="M336 581 L350 581.2 L375 585 L399 588.6 L412 579.2 L422 575.6 L434 579 L440 590 L446 596.8 L455 600.2 L464 604.6 L473 610 L476 619 L478 631" stroke="#f8e29a" stroke-width="1.6"/>
<path d="M60.4 564.1 L77.6 561.8 L88.8 556.2 L100.1 542.7 L111.4 535.9 L129.4 533.6 L149.7 535.9 L163.3 540.4 L172.3 549.4 L181.3 558.5" stroke="#f8e29a" stroke-width="1.5"/>
<path d="M140.7 538 L141 563" stroke="#f8e29a" stroke-width="1.2"/>
<path d="M96 516 L110 523 L128 526 L150 527" stroke="#f8e29a" stroke-width="1.2"/>
<path d="M220.6 498.9 L233 502.6 L245.5 504.5 L269.1 504.5 L278.2 503.9" stroke="#fbc97c" stroke-width="1.8"/>
<path d="M278.2 503.9 L284.9 502.2 L305.2 500.6 L327.8 497.2 L335 494.9 L342 492" stroke="#f8e29a" stroke-width="1.6"/>
<path d="M226.3 524.8 L243.2 522.5 L254.5 521.4 L263.5 515.2 L271.4 509.6 L278.2 504.6" stroke="#f8e29a" stroke-width="1.5"/>
<path d="M326 480 L326.4 499" stroke="#f8e29a" stroke-width="1.3"/>
<path d="M337 497 L341.3 510 L342.5 530 L343.6 552 L338 566" stroke="#fbc48a" stroke-width="1.3" stroke-opacity=".85"/>
<path d="M505.5 480 L504.6 495.3 L502.3 520.1 L511.3 538.2 L524.9 556.2 L531.6 576.5 L542.9 601.3 L549.7 619.4 L553 631" stroke="#f8e29a" stroke-width="1.6"/>
<path d="M553 480 L551.9 497.6 L548.5 531.4 L551.9 565.2 L558.7 601.3 L566 631" stroke="#f8e29a" stroke-width="1.5"/>
</g>
<g fill="none" stroke="#8e8e8e" stroke-width="1.1" stroke-linejoin="round" stroke-opacity=".8">
<path d="M60.4 572 L77.6 563 L100.1 545 L118.2 538.2 L145.2 534.8 L167.8 534.1 L190.3 539.3 L208.4 540.4 L235 530.3 L215 527.6 L226.3 527 L260.1 524.8 L293.9 523.1 L335 521.4 L349 523.5 L363.2 526.5 L404.9 499.4 L407.2 492.7 L407.2 480" stroke-opacity="0"/>
<path d="M60.4 572 L77.6 563 L100.1 545 L118.2 538.2 L145.2 534.8 L167.8 534.1 L190.3 539.3 L208.4 540.4 L222 535.6 L235 529 L260.1 524.8 L293.9 523.1 L335 521.4 L349 523.5 L363.2 526.5 L385 512 L404.9 499.4 L407.2 492.7 L407.2 480"/>
<path d="M404.9 499.4 L423 515.2 L436.5 532.1 L439.9 541.2 L439.1 549.4 L440.3 565.2 L452.7 574.3 L468.5 583.3 L475.2 596.8 L497.8 598 L531.6 596.8 L561 608.1 L588 610.3"/>
<path d="M60.4 576 L78 566.5 L101 548 L119 541 L146 538 L168 537.6 L190 543 L209 544 L236 533.5" stroke="#b5b5b5"/>
<path d="M497.8 594.6 L506.8 574.3 L518.1 560.7 L538.4 549.4 L547.4 540.4 L547.4 515.6 L549.7 504.3 L549 480" stroke="#a8a8a8"/>
<path d="M511.3 565.2 L529.4 551.7 L547.4 544.9 L566 541 L588 546" stroke="#b0b0b0"/>
<path d="M386 480 L392 492 L407 499" stroke="#b0b0b0"/>
<path d="M468.5 583.3 L482 590 L497.8 598" stroke="#b0b0b0"/>
</g>
<path d="M60.4 512.2 L66.3 504.3" stroke="#6a78d8" stroke-width="2.6"/>
<g fill="none" stroke="#8b8b8b" stroke-width="1.25" stroke-opacity=".9">
<circle cx="328" cy="575" r="86"/>
<circle cx="328" cy="575" r="172.5"/>
<circle cx="328" cy="575" r="258"/>
</g>
<g fill="#5f5f5f" stroke="#fff" stroke-opacity=".6" stroke-width="1.2" paint-order="stroke" text-anchor="middle">
<text x="345.8" y="524.6" font-size="12.2">藤沢</text>
<text x="563.2" y="515.2" font-size="11.4">金沢</text>
<text x="485.4" y="607.8" font-size="11.4">逗子</text>
<text x="70.5" y="580" font-size="11.4">大磯</text>
<text x="213" y="534.6" font-size="11.4">茅ヶ崎</text>
</g>
<text x="154.3" y="567.4" font-size="8.6" fill="#8fc3dc" text-anchor="middle">相模川</text>
<path d="M447.7 545.6 C446.2 542.6 441.7 539.0 441.7 534.5 A6 6 0 0 1 453.7 534.5 C453.7 539.0 449.2 542.6 447.7 545.6Z" fill="#9b9b9b"/><circle cx="447.7" cy="534.5" r="2.6" fill="#fff"/>
<path d="M441.4 552.2 C439.9 549.2 435.4 545.6 435.4 541.1 A6 6 0 0 1 447.4 541.1 C447.4 545.6 442.9 549.2 441.4 552.2Z" fill="#9b9b9b"/><circle cx="441.4" cy="541.1" r="2.6" fill="#fff"/>
<path d="M415.5 562.2 C414.0 559.2 409.5 555.6 409.5 551.1 A6 6 0 0 1 421.5 551.1 C421.5 555.6 417.0 559.2 415.5 562.2Z" fill="#9b9b9b"/><circle cx="415.5" cy="551.1" r="2.6" fill="#fff"/>
<path d="M328.1 575.2 C326.1 571.2 320.1 566.4 320.1 560.4 A8 8 0 0 1 336.1 560.4 C336.1 566.4 330.1 571.2 328.1 575.2Z" fill="#c60b66"/><circle cx="328.1" cy="560.4" r="3.5" fill="#fff"/>
<rect x="390.6" y="481.8" width="195.4" height="12.4" fill="#fff" fill-opacity=".5"/>
<text x="394" y="491.3" font-size="9.9" fill="#555" fill-opacity=".75" textLength="189.5" lengthAdjust="spacingAndGlyphs">© Mapbox © OpenStreetMap Improve this map</text>
<rect x="69" y="516" width="151.3" height="15.5" fill="#fff" fill-opacity=".72"/>
<rect x="69.3" y="488.6" width="150.8" height="29" rx="2.5" fill="#000" fill-opacity=".13"/>
<rect x="69" y="487.9" width="151.3" height="28.6" rx="2.5" fill="#fff"/>
<text x="79.7" y="506.9" font-size="11.9" fill="#333">標準地図</text>
<path d="M202.2 501 h7.2 l-3.6 3.8Z" fill="#666"/>
<g font-size="7.6" fill="#3a3a3a"><text x="71.7" y="527.2">緯度 35.3122</text><text x="119.8" y="527.2">経度 139.6052</text><text x="174.6" y="527.2">ズーム 10.5</text></g>
<rect x="560.2" y="547.3" width="19.6" height="20.5" rx="2.5" fill="#000" fill-opacity=".12"/>
<rect x="560.5" y="547.6" width="19" height="19.9" rx="2" fill="#fff"/>
<circle cx="570" cy="557.6" r="3.3" fill="none" stroke="#333" stroke-width="1"/><circle cx="570" cy="557.6" r="1.5" fill="#333"/><path d="M570 552.8 v1.5 M570 560.9 v1.5 M565.2 557.6 h1.5 M573.3 557.6 h1.5" stroke="#333" stroke-width="1"/>
<rect x="560.2" y="576.2" width="19.6" height="40.8" rx="2.5" fill="#000" fill-opacity=".12"/>
<rect x="560.5" y="576.5" width="19" height="40.2" rx="2" fill="#fff"/>
<path d="M560.5 596.8 h19" stroke="#e0e0e0" stroke-width="1"/>
<path d="M567 586.7 h6 M570 583.7 v6 M567 605.8 h6" stroke="#222" stroke-width="1.8"/>
<rect x="455" y="622.8" width="133" height="9" fill="#fff" fill-opacity=".72"/>
<circle cx="473" cy="631.5" r="4" fill="none" stroke="#ccc" stroke-width="0.8"/>
<rect x="161.7" y="620.6" width="293.3" height="11" fill="#fff"/>
<defs><linearGradient id="lg"><stop offset="0" stop-color="#ffe3e3"/><stop offset=".5" stop-color="#ff8a8a"/><stop offset="1" stop-color="#ff0d0d"/></linearGradient></defs>
<rect x="246" y="628.4" width="137" height="3" fill="url(#lg)"/>
<text x="167" y="638.6" font-size="10.5" fill="#222">推計来訪率が低い</text>
<text x="390.6" y="638.6" font-size="10.5" fill="#222">推計来訪率が高い</text>
<circle cx="74.9" cy="636" r="6.4" fill="#fff" stroke="#7d8f97" stroke-opacity=".8" stroke-width="1.2"/>
</svg>
</div>

<!-- widget 2 -->
<div class="abs" style="left:606.3px;top:434.5px;width:562px;height:196.5px;background:#fff;border-radius:5px 5px 0 0;box-shadow:0 0 2px rgba(0,0,0,.12)"></div>
<div class="abs" style="left:606.3px;top:471px;width:562px;height:1px;background:#e6e6e6"></div>
<div class="abs" style="left:606.3px;top:472px;width:19.5px;height:159px;background:#fafafa;border-right:1px solid #e6e6e6"></div>
<svg class="abs" style="left:611px;top:447.5px" width="12" height="12" viewBox="0 0 12 12"><circle cx="6" cy="6" r="5.2" fill="none" stroke="#555" stroke-width="1.15"/><ellipse cx="6" cy="6" rx="2.4" ry="5.2" fill="none" stroke="#555" stroke-width="0.9"/><path d="M0.8 6H11.2M1.6 3.4H10.4M1.6 8.6H10.4M6 .8V11.2" stroke="#555" stroke-width="0.9" fill="none"/></svg>
<div class="wt" style="left:631px;top:445.7px;line-height:18px">デイリー来訪速報</div>
<svg class="abs" style="left:1107.4px;top:447.4px" width="12" height="11" viewBox="0 0 12 11"><path d="M0.9 4V0.9H4.2M7.6 0.9H10.9V4M10.9 7V10.1H7.6M4.2 10.1H0.9V7" fill="none" stroke="#5a5a5a" stroke-width="1.4"/></svg><svg class="abs" style="left:1147.5px;top:445.8px" width="4" height="14" viewBox="0 0 4 14"><g fill="#5a5a5a"><circle cx="2" cy="2.2" r="1.45"/><circle cx="2" cy="6.8" r="1.45"/><circle cx="2" cy="11.4" r="1.45"/></g></svg><svg class="abs" style="left:609.4px;top:558px" width="10" height="12" viewBox="0 0 10 12"><path d="M1.9 0.8L7.7 5.6L1.9 10.4" fill="none" stroke="#555" stroke-width="1.8"/></svg>
<svg class="abs" style="left:606px;top:472px" width="568" height="177" viewBox="606 472 568 177" font-family="'Liberation Sans','Noto Sans CJK JP',sans-serif">
<rect x="704.2" y="502.4" width="14.0" height="95" fill="#e0f3fc"/>
<rect x="718.2" y="502.4" width="56.0" height="95" fill="#fdeafd"/>
<rect x="802.2" y="502.4" width="14.0" height="95" fill="#e0f3fc"/>
<rect x="816.2" y="502.4" width="14.0" height="95" fill="#fdeafd"/>
<rect x="900.2" y="502.4" width="14.0" height="95" fill="#e0f3fc"/>
<rect x="914.2" y="502.4" width="14.0" height="95" fill="#fdeafd"/>
<rect x="998.2" y="502.4" width="14.0" height="95" fill="#e0f3fc"/>
<rect x="1012.2" y="502.4" width="14.0" height="95" fill="#fdeafd"/>
<rect x="1096.2" y="502.4" width="14.0" height="95" fill="#e0f3fc"/>
<rect x="1110.2" y="502.4" width="14.0" height="95" fill="#fdeafd"/>
<line x1="704" x2="1138" y1="578.4" y2="578.4" stroke="#e6e6e6" stroke-width="1" stroke-dasharray="2 3"/>
<line x1="704" x2="1138" y1="559.4" y2="559.4" stroke="#e6e6e6" stroke-width="1" stroke-dasharray="2 3"/>
<line x1="704" x2="1138" y1="540.4" y2="540.4" stroke="#e6e6e6" stroke-width="1" stroke-dasharray="2 3"/>
<line x1="704" x2="1138" y1="521.4" y2="521.4" stroke="#e6e6e6" stroke-width="1" stroke-dasharray="2 3"/>
<line x1="704" x2="1138" y1="502.4" y2="502.4" stroke="#e6e6e6" stroke-width="1" stroke-dasharray="2 3"/>
<line x1="704" x2="1138" y1="491.6" y2="491.6" stroke="#e9e9e9" stroke-width="1" stroke-dasharray="2 3"/>
<line x1="704" x2="1138" y1="597.7" y2="597.7" stroke="#d4d4d4" stroke-width="1"/>
<line x1="711.2" x2="711.2" y1="597.4" y2="600.4" stroke="#d4d4d4" stroke-width="1"/>
<line x1="851.2" x2="851.2" y1="597.4" y2="600.4" stroke="#d4d4d4" stroke-width="1"/>
<line x1="991.2" x2="991.2" y1="597.4" y2="600.4" stroke="#d4d4d4" stroke-width="1"/>
<line x1="1131.2" x2="1131.2" y1="597.4" y2="600.4" stroke="#d4d4d4" stroke-width="1"/>
<text x="686" y="599.6" font-size="9" fill="#777" text-anchor="end" letter-spacing="-0.25">0</text>
<text x="686" y="580.6" font-size="9" fill="#777" text-anchor="end" letter-spacing="-0.25">2,000</text>
<text x="686" y="561.6" font-size="9" fill="#777" text-anchor="end" letter-spacing="-0.25">4,000</text>
<text x="686" y="542.6" font-size="9" fill="#777" text-anchor="end" letter-spacing="-0.25">6,000</text>
<text x="686" y="523.6" font-size="9" fill="#777" text-anchor="end" letter-spacing="-0.25">8,000</text>
<text x="686" y="504.6" font-size="9" fill="#777" text-anchor="end" letter-spacing="-0.25">10,000</text>
<text x="637.3" y="494.2" font-size="9.2" fill="#4d4d4d" letter-spacing="0">推計来訪数(人)</text>
<text x="711.2" y="612.2" font-size="9.5" fill="#777" text-anchor="middle" letter-spacing="-0.15">2021/05/01</text>
<text x="851.2" y="612.2" font-size="9.5" fill="#777" text-anchor="middle" letter-spacing="-0.15">2021/05/11</text>
<text x="991.2" y="612.2" font-size="9.5" fill="#777" text-anchor="middle" letter-spacing="-0.15">2021/05/21</text>
<text x="1131.2" y="612.2" font-size="9.5" fill="#777" text-anchor="middle" letter-spacing="-0.15">2021/05/31</text>
<text transform="translate(736.1 508.9) rotate(90)" font-size="8.75" fill="#b3a6b3">憲法記念日</text>
<text transform="translate(750.1 508.9) rotate(90)" font-size="8.75" fill="#b3a6b3">みどりの日</text>
<text transform="translate(764.1 508.9) rotate(90)" font-size="8.75" fill="#b3a6b3">こどもの日</text>
<polyline points="711.2,548.0 725.2,514.8 739.2,523.4 753.2,522.6 767.2,553.6 781.2,573.8 795.2,564.0 809.2,556.7 823.2,542.3 837.2,565.9 851.2,572.1 865.2,566.0 879.2,573.3 893.2,562.0 907.2,551.3 921.2,552.7 935.2,571.8 949.2,566.8 963.2,572.6 977.2,564.0 991.2,570.5 1005.2,562.8 1019.2,533.0 1033.2,569.0 1047.2,556.7 1061.2,554.7 1075.2,571.5 1089.2,553.5 1103.2,531.7 1117.2,532.2 1131.2,551.3" fill="none" stroke="#5bc99c" stroke-width="1.9" stroke-linejoin="round"/>
<g fill="#5bc99c"><circle cx="711.2" cy="548.0" r="2.35"/><circle cx="725.2" cy="514.8" r="2.35"/><circle cx="739.2" cy="523.4" r="2.35"/><circle cx="753.2" cy="522.6" r="2.35"/><circle cx="767.2" cy="553.6" r="2.35"/><circle cx="781.2" cy="573.8" r="2.35"/><circle cx="795.2" cy="564.0" r="2.35"/><circle cx="809.2" cy="556.7" r="2.35"/><circle cx="823.2" cy="542.3" r="2.35"/><circle cx="837.2" cy="565.9" r="2.35"/><circle cx="851.2" cy="572.1" r="2.35"/><circle cx="865.2" cy="566.0" r="2.35"/><circle cx="879.2" cy="573.3" r="2.35"/><circle cx="893.2" cy="562.0" r="2.35"/><circle cx="907.2" cy="551.3" r="2.35"/><circle cx="921.2" cy="552.7" r="2.35"/><circle cx="935.2" cy="571.8" r="2.35"/><circle cx="949.2" cy="566.8" r="2.35"/><circle cx="963.2" cy="572.6" r="2.35"/><circle cx="977.2" cy="564.0" r="2.35"/><circle cx="991.2" cy="570.5" r="2.35"/><circle cx="1005.2" cy="562.8" r="2.35"/><circle cx="1019.2" cy="533.0" r="2.35"/><circle cx="1033.2" cy="569.0" r="2.35"/><circle cx="1047.2" cy="556.7" r="2.35"/><circle cx="1061.2" cy="554.7" r="2.35"/><circle cx="1075.2" cy="571.5" r="2.35"/><circle cx="1089.2" cy="553.5" r="2.35"/><circle cx="1103.2" cy="531.7" r="2.35"/><circle cx="1117.2" cy="532.2" r="2.35"/><circle cx="1131.2" cy="551.3" r="2.35"/></g>
<polyline points="711.2,585.0 725.2,578.0 739.2,579.5 753.2,576.0 767.2,590.0 781.2,594.3 795.2,593.7 809.2,594.3 823.2,590.0 837.2,595.1 851.2,595.4 865.2,594.8 879.2,595.5 893.2,592.7 907.2,587.6 921.2,590.7 935.2,595.5 949.2,596.2 963.2,594.3 977.2,595.1 991.2,597.4 1005.2,591.5 1019.2,581.4 1033.2,593.1 1047.2,593.8 1061.2,592.7 1075.2,597.4 1089.2,593.5 1103.2,588.1 1117.2,589.6 1131.2,593.2" fill="none" stroke="#14324d" stroke-width="1.9" stroke-linejoin="round"/>
<g fill="#14324d"><circle cx="711.2" cy="585.0" r="2.35"/><circle cx="725.2" cy="578.0" r="2.35"/><circle cx="739.2" cy="579.5" r="2.35"/><circle cx="753.2" cy="576.0" r="2.35"/><circle cx="767.2" cy="590.0" r="2.35"/><circle cx="781.2" cy="594.3" r="2.35"/><circle cx="795.2" cy="593.7" r="2.35"/><circle cx="809.2" cy="594.3" r="2.35"/><circle cx="823.2" cy="590.0" r="2.35"/><circle cx="837.2" cy="595.1" r="2.35"/><circle cx="851.2" cy="595.4" r="2.35"/><circle cx="865.2" cy="594.8" r="2.35"/><circle cx="879.2" cy="595.5" r="2.35"/><circle cx="893.2" cy="592.7" r="2.35"/><circle cx="907.2" cy="587.6" r="2.35"/><circle cx="921.2" cy="590.7" r="2.35"/><circle cx="935.2" cy="595.5" r="2.35"/><circle cx="949.2" cy="596.2" r="2.35"/><circle cx="963.2" cy="594.3" r="2.35"/><circle cx="977.2" cy="595.1" r="2.35"/><circle cx="991.2" cy="597.4" r="2.35"/><circle cx="1005.2" cy="591.5" r="2.35"/><circle cx="1019.2" cy="581.4" r="2.35"/><circle cx="1033.2" cy="593.1" r="2.35"/><circle cx="1047.2" cy="593.8" r="2.35"/><circle cx="1061.2" cy="592.7" r="2.35"/><circle cx="1075.2" cy="597.4" r="2.35"/><circle cx="1089.2" cy="593.5" r="2.35"/><circle cx="1103.2" cy="588.1" r="2.35"/><circle cx="1117.2" cy="589.6" r="2.35"/><circle cx="1131.2" cy="593.2" r="2.35"/></g>
<polyline points="711.2,572.1 725.2,567.3 739.2,557.8 753.2,566.7 767.2,587.6 781.2,584.2 795.2,577.2 809.2,581.9 823.2,583.7 837.2,583.0 851.2,578.3 865.2,573.8 879.2,576.8 893.2,576.4 907.2,581.4 921.2,583.7 935.2,586.8 949.2,579.1 963.2,582.7 977.2,583.0 991.2,574.6 1005.2,573.8 1019.2,565.9 1033.2,576.0 1047.2,578.8 1061.2,576.4 1075.2,582.7 1089.2,582.3 1103.2,573.8 1117.2,563.2 1131.2,570.5" fill="none" stroke="#b47bee" stroke-width="1.9" stroke-linejoin="round"/>
<g fill="#b47bee"><circle cx="711.2" cy="572.1" r="2.35"/><circle cx="725.2" cy="567.3" r="2.35"/><circle cx="739.2" cy="557.8" r="2.35"/><circle cx="753.2" cy="566.7" r="2.35"/><circle cx="767.2" cy="587.6" r="2.35"/><circle cx="781.2" cy="584.2" r="2.35"/><circle cx="795.2" cy="577.2" r="2.35"/><circle cx="809.2" cy="581.9" r="2.35"/><circle cx="823.2" cy="583.7" r="2.35"/><circle cx="837.2" cy="583.0" r="2.35"/><circle cx="851.2" cy="578.3" r="2.35"/><circle cx="865.2" cy="573.8" r="2.35"/><circle cx="879.2" cy="576.8" r="2.35"/><circle cx="893.2" cy="576.4" r="2.35"/><circle cx="907.2" cy="581.4" r="2.35"/><circle cx="921.2" cy="583.7" r="2.35"/><circle cx="935.2" cy="586.8" r="2.35"/><circle cx="949.2" cy="579.1" r="2.35"/><circle cx="963.2" cy="582.7" r="2.35"/><circle cx="977.2" cy="583.0" r="2.35"/><circle cx="991.2" cy="574.6" r="2.35"/><circle cx="1005.2" cy="573.8" r="2.35"/><circle cx="1019.2" cy="565.9" r="2.35"/><circle cx="1033.2" cy="576.0" r="2.35"/><circle cx="1047.2" cy="578.8" r="2.35"/><circle cx="1061.2" cy="576.4" r="2.35"/><circle cx="1075.2" cy="582.7" r="2.35"/><circle cx="1089.2" cy="582.3" r="2.35"/><circle cx="1103.2" cy="573.8" r="2.35"/><circle cx="1117.2" cy="563.2" r="2.35"/><circle cx="1131.2" cy="570.5" r="2.35"/></g>
<polyline points="711.2,571.0 725.2,553.2 739.2,544.6 753.2,536.6 767.2,571.3 781.2,587.3 795.2,589.6 809.2,574.6 823.2,561.7 837.2,581.1 851.2,590.0 865.2,589.3 879.2,588.4 893.2,583.7 907.2,569.0 921.2,574.1 935.2,590.7 949.2,586.1 963.2,585.3 977.2,584.7 991.2,589.2 1005.2,566.4 1019.2,544.2 1033.2,579.2 1047.2,581.9 1061.2,576.1 1075.2,588.4 1089.2,577.5 1103.2,570.2 1117.2,557.5 1131.2,579.5" fill="none" stroke="#c4156b" stroke-width="1.9" stroke-linejoin="round"/>
<g fill="#c4156b"><circle cx="711.2" cy="571.0" r="2.35"/><circle cx="725.2" cy="553.2" r="2.35"/><circle cx="739.2" cy="544.6" r="2.35"/><circle cx="753.2" cy="536.6" r="2.35"/><circle cx="767.2" cy="571.3" r="2.35"/><circle cx="781.2" cy="587.3" r="2.35"/><circle cx="795.2" cy="589.6" r="2.35"/><circle cx="809.2" cy="574.6" r="2.35"/><circle cx="823.2" cy="561.7" r="2.35"/><circle cx="837.2" cy="581.1" r="2.35"/><circle cx="851.2" cy="590.0" r="2.35"/><circle cx="865.2" cy="589.3" r="2.35"/><circle cx="879.2" cy="588.4" r="2.35"/><circle cx="893.2" cy="583.7" r="2.35"/><circle cx="907.2" cy="569.0" r="2.35"/><circle cx="921.2" cy="574.1" r="2.35"/><circle cx="935.2" cy="590.7" r="2.35"/><circle cx="949.2" cy="586.1" r="2.35"/><circle cx="963.2" cy="585.3" r="2.35"/><circle cx="977.2" cy="584.7" r="2.35"/><circle cx="991.2" cy="589.2" r="2.35"/><circle cx="1005.2" cy="566.4" r="2.35"/><circle cx="1019.2" cy="544.2" r="2.35"/><circle cx="1033.2" cy="579.2" r="2.35"/><circle cx="1047.2" cy="581.9" r="2.35"/><circle cx="1061.2" cy="576.1" r="2.35"/><circle cx="1075.2" cy="588.4" r="2.35"/><circle cx="1089.2" cy="577.5" r="2.35"/><circle cx="1103.2" cy="570.2" r="2.35"/><circle cx="1117.2" cy="557.5" r="2.35"/><circle cx="1131.2" cy="579.5" r="2.35"/></g>
<polyline points="711.2,585.8 725.2,580.8 739.2,576.9 753.2,579.2 767.2,591.5 781.2,594.6 795.2,593.1 809.2,588.6 823.2,592.7 837.2,594.3 851.2,592.0 865.2,593.1 879.2,595.1 893.2,586.1 907.2,588.4 921.2,592.0 935.2,595.9 949.2,595.1 963.2,596.3 977.2,592.7 991.2,593.8 1005.2,586.5 1019.2,583.0 1033.2,586.2 1047.2,591.2 1061.2,588.1 1075.2,594.0 1089.2,588.1 1103.2,580.8 1117.2,574.1 1131.2,583.9" fill="none" stroke="#6db3ff" stroke-width="1.9" stroke-linejoin="round"/>
<g fill="#6db3ff"><circle cx="711.2" cy="585.8" r="2.35"/><circle cx="725.2" cy="580.8" r="2.35"/><circle cx="739.2" cy="576.9" r="2.35"/><circle cx="753.2" cy="579.2" r="2.35"/><circle cx="767.2" cy="591.5" r="2.35"/><circle cx="781.2" cy="594.6" r="2.35"/><circle cx="795.2" cy="593.1" r="2.35"/><circle cx="809.2" cy="588.6" r="2.35"/><circle cx="823.2" cy="592.7" r="2.35"/><circle cx="837.2" cy="594.3" r="2.35"/><circle cx="851.2" cy="592.0" r="2.35"/><circle cx="865.2" cy="593.1" r="2.35"/><circle cx="879.2" cy="595.1" r="2.35"/><circle cx="893.2" cy="586.1" r="2.35"/><circle cx="907.2" cy="588.4" r="2.35"/><circle cx="921.2" cy="592.0" r="2.35"/><circle cx="935.2" cy="595.9" r="2.35"/><circle cx="949.2" cy="595.1" r="2.35"/><circle cx="963.2" cy="596.3" r="2.35"/><circle cx="977.2" cy="592.7" r="2.35"/><circle cx="991.2" cy="593.8" r="2.35"/><circle cx="1005.2" cy="586.5" r="2.35"/><circle cx="1019.2" cy="583.0" r="2.35"/><circle cx="1033.2" cy="586.2" r="2.35"/><circle cx="1047.2" cy="591.2" r="2.35"/><circle cx="1061.2" cy="588.1" r="2.35"/><circle cx="1075.2" cy="594.0" r="2.35"/><circle cx="1089.2" cy="588.1" r="2.35"/><circle cx="1103.2" cy="580.8" r="2.35"/><circle cx="1117.2" cy="574.1" r="2.35"/><circle cx="1131.2" cy="583.9" r="2.35"/></g>
</svg>
<svg class="abs" style="left:0;top:0;pointer-events:none" width="1209" height="709" viewBox="0 0 1209 709">
 <g fill="none" stroke="#4f7ccf" stroke-width="1.45" stroke-dasharray="4.5 3.35">
  <rect x="18" y="108" width="1174" height="295.3" rx="9" ry="9"/>
  <rect x="27.8" y="433.5" width="569.5" height="202.3" rx="5.5" ry="5.5"/>
  <rect x="604.9" y="433.5" width="569.3" height="202.3" rx="5.5" ry="5.5"/>
 </g>
 <g fill="none" stroke="#4f7ccf" stroke-width="1.2" stroke-dasharray="4 3">
  <path d="M559.5 39 L604.6 107"/>
  <path d="M503.9 637.5 L604.4 671 L703.4 637"/>
 </g>
</svg>
</body>
</html>
